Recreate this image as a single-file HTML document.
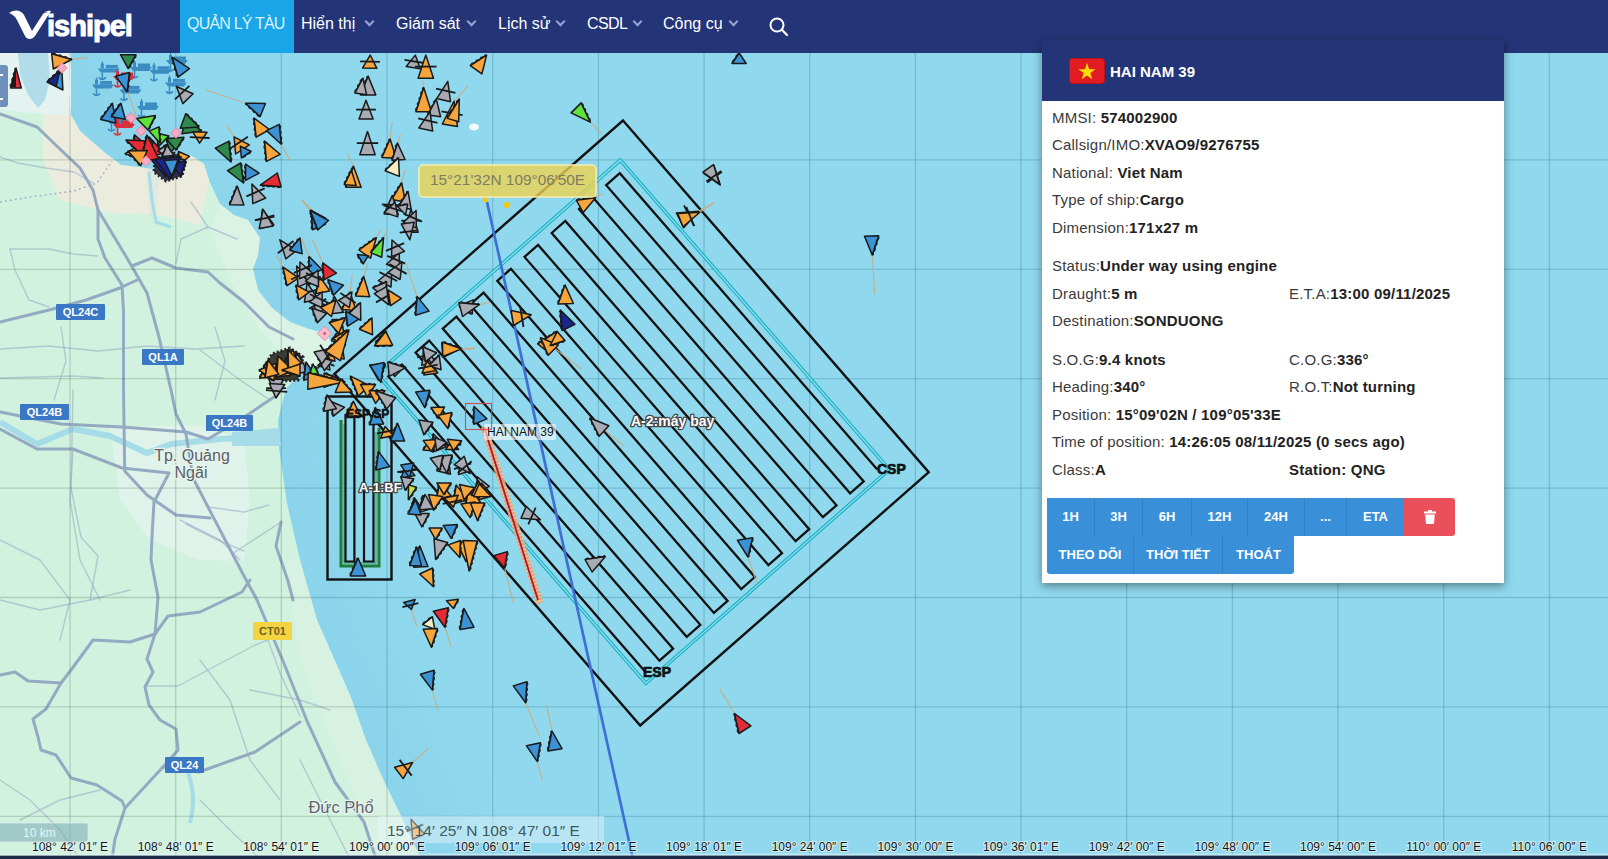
<!DOCTYPE html><html><head><meta charset="utf-8"><style>
*{margin:0;padding:0;box-sizing:border-box}
html,body{width:1608px;height:859px;overflow:hidden;background:#90d8ed;font-family:"Liberation Sans",sans-serif}
#map{position:absolute;left:0;top:0;width:1608px;height:859px}
#hdr{position:absolute;left:0;top:0;width:1608px;height:53px;background:#243577}
.nav{position:absolute;top:0;height:53px;line-height:47px;color:#fff;font-size:16px;white-space:nowrap}
.nav.act{background:#1aa5e8;color:#d8f3ff}
.chev{position:absolute;top:17.5px;width:7px;height:7px;border-right:2px solid #96a4d4;border-bottom:2px solid #96a4d4;transform:rotate(45deg)}
#panel{position:absolute;left:1042px;top:40px;width:462px;height:543px;background:#fff;box-shadow:0 3px 9px rgba(0,0,0,.42)}
#ph{position:absolute;left:0;top:0;width:462px;height:61px;background:#243577}
.row{position:absolute;left:10px;font-size:15px;letter-spacing:0.2px;color:#3a3a3a;white-space:nowrap;line-height:18px}
.row b{color:#222}
.c2{left:247px}
.btn{position:absolute;height:38px;background:#3a8fd9;color:#fff;font-weight:bold;font-size:13px;text-align:center;line-height:38px;border-right:1px solid #3580c4}

</style></head><body>
<svg id="map" width="1608" height="859" viewBox="0 0 1608 859">
<defs><filter id="blur" x="-20%" y="-20%" width="140%" height="140%"><feGaussianBlur stdDeviation="25"/></filter></defs>
<rect width="1608" height="859" fill="#90d8ed"/>
<polygon points="0,0 131,53 129,90 131,115 140,131 164,152 181,165 206,168 210,215 216,214 220,170 235,163 250,155 264,164 269,180 280,204 294,215 308,220 320,238 318,255 313,269 318,290 332,308 350,322 369,329 387,334 393,348 386,362 367,369 346,388 338,420 339,448 347,503 360,560 377,620 410,695 426,740 443,779 461,816 481,859 0,859" fill="#80cce6" opacity="0.3" filter="url(#blur)"/>
<g stroke="rgb(0,80,100)" stroke-opacity="0.2" stroke-width="1.3"><line x1="70.0" y1="53" x2="70.0" y2="859"/><line x1="175.7" y1="53" x2="175.7" y2="859"/><line x1="281.3" y1="53" x2="281.3" y2="859"/><line x1="387.0" y1="53" x2="387.0" y2="859"/><line x1="492.7" y1="53" x2="492.7" y2="859"/><line x1="598.4" y1="53" x2="598.4" y2="859"/><line x1="704.0" y1="53" x2="704.0" y2="859"/><line x1="809.7" y1="53" x2="809.7" y2="859"/><line x1="915.4" y1="53" x2="915.4" y2="859"/><line x1="1021.0" y1="53" x2="1021.0" y2="859"/><line x1="1126.7" y1="53" x2="1126.7" y2="859"/><line x1="1232.4" y1="53" x2="1232.4" y2="859"/><line x1="1338.0" y1="53" x2="1338.0" y2="859"/><line x1="1443.7" y1="53" x2="1443.7" y2="859"/><line x1="1549.4" y1="53" x2="1549.4" y2="859"/><line x1="0" y1="50.5" x2="1608" y2="50.5"/><line x1="0" y1="159.9" x2="1608" y2="159.9"/><line x1="0" y1="269.3" x2="1608" y2="269.3"/><line x1="0" y1="378.7" x2="1608" y2="378.7"/><line x1="0" y1="488.1" x2="1608" y2="488.1"/><line x1="0" y1="597.5" x2="1608" y2="597.5"/><line x1="0" y1="706.9" x2="1608" y2="706.9"/><line x1="0" y1="816.3" x2="1608" y2="816.3"/></g>
<polygon points="0,53 71,53 69,90 71,115 80,131 104,152 121,165 146,168 150,215 156,214 160,170 175,163 190,155 204,164 209,180 220,204 234,215 248,220 260,238 258,255 253,269 258,290 272,308 290,322 309,329 327,334 333,348 326,362 307,369 286,388 278,420 279,448 287,503 300,560 317,620 350,695 366,740 383,779 401,816 421,859 0,859" fill="#d0f2de"/>
<g>
<path d="M0,53 L71,53 L71,118 L43,114 L0,110 Z" fill="#e4f3f0"/>
<path d="M43,114 L71,115 L80,131 L104,152 L121,165 L146,168 L160,170 L190,155 L204,164 L209,180 L200,225 L160,215 L110,213 L60,200 L43,160 Z" fill="#f0ebde" opacity="0.85"/>
<path d="M18,53 L48,53 L50,80 L45,100 L38,108 L28,95 L20,75 Z" fill="#b0dde9"/>
<path d="M110,427 L200,425 L244,440 L250,500 L244,561 L200,560 L150,540 L120,500 Z" fill="#e4f3ec" opacity="0.8"/>
<path d="M220,204 L234,215 L248,220 L260,238 L258,255 L253,269 L258,290 L272,308 L290,322 L309,329 L327,334 L333,348 L326,362 L300,372 L260,330 L230,280 L210,230 Z" fill="#e6f5ee" opacity="0.45"/>
<path d="M300,560 L317,620 L350,695 L366,740 L383,779 L401,816 L421,859 L380,859 L340,760 L300,660 L285,560 Z" fill="#ddf3e6" opacity="0.55"/>
</g>
<polyline points="0,422 37,444 73,429 110,436 147,453 171,444 220,439 279,436" fill="none" stroke="#a6dbe8" stroke-width="6" stroke-linejoin="round"/>
<polygon points="232,432 279,428 281,446 232,446" fill="#a6dbe8"/>
<polyline points="149,172 152,200 156,222 171,227" fill="none" stroke="#a6dbe8" stroke-width="3"/>
<path d="M188,772 C192,785 196,800 190,823" fill="none" stroke="#a6dbe8" stroke-width="4"/>
<g fill="none" stroke="#94a9c2" stroke-linejoin="round" stroke-linecap="round">
<polyline points="0,157 18,163 46,168 74,172 93,183" stroke-width="1.4" opacity="0.55"/>
<polyline points="10,249 49,249 73,254 98,256" stroke-width="1.4" opacity="0.55"/>
<polyline points="10,249 15,270 29,300 49,307" stroke-width="1.4" opacity="0.55"/>
<polyline points="176,263 181,239 208,227 237,239" stroke-width="1.4" opacity="0.55"/>
<polyline points="191,202 208,227" stroke-width="1.4" opacity="0.55"/>
<polyline points="232,554 281,522" stroke-width="1.4" opacity="0.55"/>
<polyline points="145,686 178,686 255,645 268,640" stroke-width="1.4" opacity="0.55"/>
<polyline points="268,640 280,673 300,716" stroke-width="1.4" opacity="0.55"/>
<polyline points="0,540 40,560 70,600 60,640" stroke-width="1.4" opacity="0.55"/>
<polyline points="180,520 220,540 240,560" stroke-width="1.4" opacity="0.55"/>
<polyline points="0,780 30,800 60,830 80,859" stroke-width="1.4" opacity="0.55"/>
<polyline points="200,800 230,830 260,859" stroke-width="1.4" opacity="0.55"/>
<polyline points="200,350 240,380 270,400" stroke-width="1.4" opacity="0.55"/>
<polyline points="73,449 70,500 80,560 100,600" stroke-width="1.4" opacity="0.55"/>
<polyline points="300,760 320,800 350,859" stroke-width="1.4" opacity="0.55"/>
<polyline points="250,690 300,700 330,710" stroke-width="1.4" opacity="0.55"/>
<polyline points="0,349 49,346 98,351 147,346 196,349 244,346" stroke-width="1.4" opacity="0.55"/>
<polyline points="61,327 66,361 54,400" stroke-width="1.4" opacity="0.55"/>
<polyline points="215,327 225,361 215,400" stroke-width="1.4" opacity="0.55"/>
<polyline points="0,378 73,376 103,378" stroke-width="1.4" opacity="0.55"/>
<polyline points="73,390 71,488 81,537 98,556 90,600" stroke-width="1.4" opacity="0.55"/>
<polyline points="208,507 244,512 269,505" stroke-width="1.4" opacity="0.55"/>
<polyline points="186,524 220,541 244,551" stroke-width="1.4" opacity="0.55"/>
<polyline points="0,600 40,610 90,600 130,590" stroke-width="1.4" opacity="0.55"/>
<polyline points="200,660 230,700 250,760 280,800" stroke-width="1.4" opacity="0.55"/>
<polyline points="20,820 60,800 100,790" stroke-width="1.4" opacity="0.55"/>
<polyline points="0,114 37,127 61,150 80,168 93,190 98,210 98,239 105,258 122,285 123.5,312 123.5,390 124.7,471 147,495 176,515 210,518" stroke-width="3"/>
<polyline points="98,210 127,258 147,293 159,337 171,390 176,414 186,434 193,478 208,507 244,576 257,600 283,661 307,721 335,782 364,822 376,859" stroke-width="3"/>
<polyline points="0,322 49,310 86,300 120,288 137,280" stroke-width="3"/>
<polyline points="132,266 152,258 176,268 208,272 220,283 244,302 269,327 293,339" stroke-width="3"/>
<polyline points="0,412 61,424 122,427 186,432 208,439 240,420 274,397" stroke-width="3"/>
<polyline points="0,429 37,449 73,449 122,468 169,473 154,502 152,537 151,560 158,597 155,634 147,659 153,672 145,687 149,705 160,720 176,729 178,750 163,767 125,808 115,839 112,859" stroke-width="3"/>
<polyline points="281,522 276,546 288,581 293,600" stroke-width="3"/>
<polyline points="0,675 15,672 28,681 61,683 71,670 93,640 130,642 155,634" stroke-width="3"/>
<polyline points="61,683 46,709 33,719 38,737 41,750 56,755 71,778 97,785 122,801 125,808" stroke-width="3"/>
<polyline points="163,767 199,772 255,752 300,722" stroke-width="3"/>
<polyline points="155,634 168,616 200,612 242,592 250,580" stroke-width="3"/>
</g>
<polyline points="0,202 37,196 74,191 97,183 112,161" fill="none" stroke="#a9b3c6" stroke-width="1.5" stroke-dasharray="2,3"/>
<clipPath id="landclip"><polygon points="0,53 71,53 69,90 71,115 80,131 104,152 121,165 146,168 150,215 156,214 160,170 175,163 190,155 204,164 209,180 220,204 234,215 248,220 260,238 258,255 253,269 258,290 272,308 290,322 309,329 327,334 333,348 326,362 307,369 286,388 278,420 279,448 287,503 300,560 317,620 350,695 366,740 383,779 401,816 421,859 0,859"/></clipPath>
<g clip-path="url(#landclip)" stroke="rgb(60,90,70)" stroke-opacity="0.22" stroke-width="1.3"><line x1="70.0" y1="53" x2="70.0" y2="859"/><line x1="175.7" y1="53" x2="175.7" y2="859"/><line x1="281.3" y1="53" x2="281.3" y2="859"/><line x1="387.0" y1="53" x2="387.0" y2="859"/><line x1="492.7" y1="53" x2="492.7" y2="859"/><line x1="598.4" y1="53" x2="598.4" y2="859"/><line x1="704.0" y1="53" x2="704.0" y2="859"/><line x1="809.7" y1="53" x2="809.7" y2="859"/><line x1="915.4" y1="53" x2="915.4" y2="859"/><line x1="1021.0" y1="53" x2="1021.0" y2="859"/><line x1="1126.7" y1="53" x2="1126.7" y2="859"/><line x1="1232.4" y1="53" x2="1232.4" y2="859"/><line x1="1338.0" y1="53" x2="1338.0" y2="859"/><line x1="1443.7" y1="53" x2="1443.7" y2="859"/><line x1="1549.4" y1="53" x2="1549.4" y2="859"/><line x1="0" y1="50.5" x2="1608" y2="50.5"/><line x1="0" y1="159.9" x2="1608" y2="159.9"/><line x1="0" y1="269.3" x2="1608" y2="269.3"/><line x1="0" y1="378.7" x2="1608" y2="378.7"/><line x1="0" y1="488.1" x2="1608" y2="488.1"/><line x1="0" y1="597.5" x2="1608" y2="597.5"/><line x1="0" y1="706.9" x2="1608" y2="706.9"/><line x1="0" y1="816.3" x2="1608" y2="816.3"/></g>
<rect x="56" y="304" width="49" height="16" fill="#3a77c5" rx="1"/>
<text x="80.5" y="316" font-family="Liberation Sans" font-size="11" font-weight="bold" fill="#fff" text-anchor="middle">QL24C</text>
<rect x="142" y="349" width="42" height="16" fill="#3a77c5" rx="1"/>
<text x="163" y="361" font-family="Liberation Sans" font-size="11" font-weight="bold" fill="#fff" text-anchor="middle">QL1A</text>
<rect x="20" y="404" width="49" height="16" fill="#3a77c5" rx="1"/>
<text x="44.5" y="416" font-family="Liberation Sans" font-size="11" font-weight="bold" fill="#fff" text-anchor="middle">QL24B</text>
<rect x="206" y="415" width="47" height="16" fill="#3a77c5" rx="1"/>
<text x="229.5" y="427" font-family="Liberation Sans" font-size="11" font-weight="bold" fill="#fff" text-anchor="middle">QL24B</text>
<rect x="165" y="757" width="39" height="16" fill="#3a77c5" rx="1"/>
<text x="184.5" y="769" font-family="Liberation Sans" font-size="11" font-weight="bold" fill="#fff" text-anchor="middle">QL24</text>
<rect x="253" y="622" width="39" height="18" fill="#f4d443" rx="1"/>
<text x="272.5" y="635" font-family="Liberation Sans" font-size="11" font-weight="bold" fill="#6b6420" text-anchor="middle">CT01</text>
<text x="192" y="461" font-family="Liberation Sans" font-size="16" fill="#5a5f66" text-anchor="middle" stroke="#e8f4ee" stroke-width="2.5" paint-order="stroke">Tp. Quảng</text>
<text x="191" y="478" font-family="Liberation Sans" font-size="16" fill="#5a5f66" text-anchor="middle" stroke="#e8f4ee" stroke-width="2.5" paint-order="stroke">Ngãi</text>
<text x="341" y="813" font-family="Liberation Sans" font-size="16.5" fill="#5f6468" text-anchor="middle" stroke="#e8f4ee" stroke-width="2.5" paint-order="stroke">Đức Phổ</text>
<polygon points="623,120.5 928.743,472.19 640.205,725.515 334.462,373.825" fill="none" stroke="#111" stroke-width="2.4" stroke-linejoin="miter"/>
<polygon points="620.332,160.103 889.333,469.53 645.879,683.273 376.878,373.846" fill="none" stroke="#12b3c4" stroke-width="3.6"/>
<polygon points="620.332,160.103 889.333,469.53 645.879,683.273 376.878,373.846" fill="none" stroke="#90d8ed" stroke-width="1.4"/>
<path d="M877.3,469.4L619.8,173.2L606.2,185.2L863.7,481.4L850.1,493.3L592.6,197.1L579.0,209.1L836.5,505.3L822.9,517.2L565.3,221.0L551.7,233.0L809.2,529.2L795.6,541.2L538.1,244.9L524.5,256.9L782.0,553.1L768.4,565.1L510.9,268.8L497.3,280.8L754.8,577.0L741.2,589.0L483.6,292.7L470.0,304.7L727.6,600.9L713.9,612.9L456.4,316.7L442.8,328.6L700.3,624.8L686.7,636.8L429.2,340.6L415.6,352.5L673.1,648.7L659.5,660.7L402.0,364.5L388.3,376.4L645.9,672.6" fill="none" stroke="#111" stroke-width="2.3" stroke-linejoin="miter"/>
<rect x="327.5" y="396.5" width="64" height="183" fill="none" stroke="#111" stroke-width="2.4"/>
<path d="M341,420 V566 H379 V428" fill="none" stroke="#1d7f38" stroke-width="3"/>
<path d="M344,424 V563 H376 V432" fill="none" stroke="#2f9a4a" stroke-width="1"/>
<path d="M345.5,414 V561.5 H354.4 V416 H364 V561.5 H373.5 V414" fill="none" stroke="#111" stroke-width="2.2"/>
<line x1="487" y1="202" x2="633" y2="859" stroke="#3f6ed4" stroke-width="2.7"/>
<line x1="484" y1="427" x2="540" y2="603" stroke="#f5c49a" stroke-width="7" opacity="0.75"/>
<line x1="484" y1="427" x2="540" y2="603" stroke="#ef9a5a" stroke-width="7" stroke-dasharray="2,1.6" opacity="0.9"/>
<line x1="484" y1="427" x2="538" y2="600" stroke="#a8183c" stroke-width="1.8"/>
<g transform="translate(108.8,68.4)" fill="#3a8cc2" stroke="none"><path d="M-11,0 H11 L8,4 H-8 Z"/><rect x="-8" y="-5" width="3" height="5"/><rect x="-3" y="-3.5" width="12" height="3.5"/><rect x="-7" y="-7" width="1.2" height="3"/><path d="M-6.5,4 V11 M-10,9 Q-6.5,13 -3,9" fill="none" stroke="#3a8cc2" stroke-width="1.6"/></g>
<g transform="translate(141.0,67.0)" fill="#3a8cc2" stroke="none"><path d="M-11,0 H11 L8,4 H-8 Z"/><rect x="-8" y="-5" width="3" height="5"/><rect x="-3" y="-3.5" width="12" height="3.5"/><rect x="-7" y="-7" width="1.2" height="3"/><path d="M-6.5,4 V11 M-10,9 Q-6.5,13 -3,9" fill="none" stroke="#3a8cc2" stroke-width="1.6"/></g>
<g transform="translate(160.5,69.8)" fill="#3a8cc2" stroke="none"><path d="M-11,0 H11 L8,4 H-8 Z"/><rect x="-8" y="-5" width="3" height="5"/><rect x="-3" y="-3.5" width="12" height="3.5"/><rect x="-7" y="-7" width="1.2" height="3"/><path d="M-6.5,4 V11 M-10,9 Q-6.5,13 -3,9" fill="none" stroke="#3a8cc2" stroke-width="1.6"/></g>
<g transform="translate(177.0,60.0)" fill="#3a8cc2" stroke="none"><path d="M-11,0 H11 L8,4 H-8 Z"/><rect x="-8" y="-5" width="3" height="5"/><rect x="-3" y="-3.5" width="12" height="3.5"/><rect x="-7" y="-7" width="1.2" height="3"/><path d="M-6.5,4 V11 M-10,9 Q-6.5,13 -3,9" fill="none" stroke="#3a8cc2" stroke-width="1.6"/></g>
<g transform="translate(103.0,84.5)" fill="#3a8cc2" stroke="none"><path d="M-11,0 H11 L8,4 H-8 Z"/><rect x="-8" y="-5" width="3" height="5"/><rect x="-3" y="-3.5" width="12" height="3.5"/><rect x="-7" y="-7" width="1.2" height="3"/><path d="M-6.5,4 V11 M-10,9 Q-6.5,13 -3,9" fill="none" stroke="#3a8cc2" stroke-width="1.6"/></g>
<g transform="translate(130.5,89.4)" fill="#3a8cc2" stroke="none"><path d="M-11,0 H11 L8,4 H-8 Z"/><rect x="-8" y="-5" width="3" height="5"/><rect x="-3" y="-3.5" width="12" height="3.5"/><rect x="-7" y="-7" width="1.2" height="3"/><path d="M-6.5,4 V11 M-10,9 Q-6.5,13 -3,9" fill="none" stroke="#3a8cc2" stroke-width="1.6"/></g>
<g transform="translate(176.0,82.4)" fill="#3a8cc2" stroke="none"><path d="M-11,0 H11 L8,4 H-8 Z"/><rect x="-8" y="-5" width="3" height="5"/><rect x="-3" y="-3.5" width="12" height="3.5"/><rect x="-7" y="-7" width="1.2" height="3"/><path d="M-6.5,4 V11 M-10,9 Q-6.5,13 -3,9" fill="none" stroke="#3a8cc2" stroke-width="1.6"/></g>
<g transform="translate(148.0,106.0)" fill="#3a8cc2" stroke="none"><path d="M-11,0 H11 L8,4 H-8 Z"/><rect x="-8" y="-5" width="3" height="5"/><rect x="-3" y="-3.5" width="12" height="3.5"/><rect x="-7" y="-7" width="1.2" height="3"/><path d="M-6.5,4 V11 M-10,9 Q-6.5,13 -3,9" fill="none" stroke="#3a8cc2" stroke-width="1.6"/></g>
<g transform="translate(118.0,120.0)" fill="#3a8cc2" stroke="none"><path d="M-11,0 H11 L8,4 H-8 Z"/><rect x="-8" y="-5" width="3" height="5"/><rect x="-3" y="-3.5" width="12" height="3.5"/><rect x="-7" y="-7" width="1.2" height="3"/><path d="M-6.5,4 V11 M-10,9 Q-6.5,13 -3,9" fill="none" stroke="#3a8cc2" stroke-width="1.6"/></g>
<g transform="translate(124.0,76.0)" fill="#d8303c" stroke="none"><path d="M-11,0 H11 L8,4 H-8 Z"/><rect x="-8" y="-5" width="3" height="5"/><rect x="-3" y="-3.5" width="12" height="3.5"/><rect x="-7" y="-7" width="1.2" height="3"/><path d="M-6.5,4 V11 M-10,9 Q-6.5,13 -3,9" fill="none" stroke="#d8303c" stroke-width="1.6"/></g>
<g transform="translate(124.0,124.0)" fill="#d8303c" stroke="none"><path d="M-11,0 H11 L8,4 H-8 Z"/><rect x="-8" y="-5" width="3" height="5"/><rect x="-3" y="-3.5" width="12" height="3.5"/><rect x="-7" y="-7" width="1.2" height="3"/><path d="M-6.5,4 V11 M-10,9 Q-6.5,13 -3,9" fill="none" stroke="#d8303c" stroke-width="1.6"/></g>
<path d="M155,160 L172,152 L186,160 L182,176 L166,181 L154,172 Z" fill="#1c2240" stroke="#111" stroke-width="3" stroke-dasharray="2,2" opacity="0.9"/>
<path d="M262,370 L272,354 L290,348 L303,357 L298,380 L272,382 Z" fill="#2a2a22" stroke="#111" stroke-width="3" stroke-dasharray="2,2" opacity="0.9"/>
<g stroke="#1a1a1a" stroke-width="1.5" stroke-linejoin="round">
<polygon points="128.2,68.7 120.5,54.7 135.9,54.7" fill="#2e8a4c"/><polyline points="135.9,54.7 135.9,57.0 133.3,59.4 133.4,61.7 130.8,64.0 130.8,66.4 128.2,68.7" fill="none" stroke-width="1.1"/>
<polygon points="172.2,57.2 189.5,68.7 178.1,77.1" fill="#3b93d6"/><polyline points="178.1,77.1 176.2,75.0 176.4,71.4 174.5,69.3 174.7,65.7 172.9,63.7 173.1,60.0 171.2,58.0" fill="none" stroke-width="1.1"/>
<line x1="127.2" y1="91.8" x2="136.6" y2="115.9" stroke="#c7ad86" stroke-width="1.2" stroke-opacity="0.9"/><polygon points="127.2,91.8 115.7,76.2 129.4,72.6" fill="#3b93d6"/><polyline points="129.4,72.6 130.3,75.0 128.8,78.1 129.7,80.5 128.1,83.5 129.1,86.0 127.5,89.0 128.4,91.5" fill="none" stroke-width="1.1"/>
<polygon points="176.4,86.5 193.1,93.8 182.8,103.6" fill="#a8abb3"/><line x1="189.4" y1="85.8" x2="175.0" y2="99.4" stroke="#1b1b1b" stroke-width="1.8"/>
<line x1="245.6" y1="103.3" x2="205.8" y2="89.7" stroke="#c7ad86" stroke-width="1.2" stroke-opacity="0.9"/><polygon points="245.6,103.3 265.4,103.4 260.2,116.6" fill="#3b93d6"/><polyline points="260.2,116.6 257.7,115.9 256.1,112.8 253.5,112.1 251.9,109.0 249.3,108.3 247.7,105.2 245.1,104.5" fill="none" stroke-width="1.1"/>
<polygon points="112.5,103.3 115.8,122.9 100.8,119.4" fill="#3b93d6"/><polyline points="100.8,119.4 101.2,116.8 104.2,114.8 104.6,112.2 107.5,110.2 107.9,107.6 110.8,105.6 111.2,103.0" fill="none" stroke-width="1.1"/>
<polygon points="120.9,103.3 125.3,119.2 111.4,116.8" fill="#3b93d6"/><polyline points="111.4,116.8 111.7,114.3 114.6,112.3 114.9,109.8 117.7,107.8 118.0,105.3 120.9,103.3" fill="none" stroke-width="1.1"/>
<polygon points="148.1,129.5 137.9,119.5 154.2,116.5" fill="#5fe33b"/><polyline points="154.2,116.5 154.2,118.9 151.8,121.7 151.8,124.1 149.3,126.9 149.4,129.3" fill="none" stroke-width="1.1"/>
<polygon points="201.6,131.0 181.9,133.8 185.7,118.9" fill="#2e8a4c"/><polyline points="185.7,118.9 188.3,119.4 190.2,122.4 192.8,122.9 194.8,125.8 197.4,126.3 199.3,129.3 201.9,129.7" fill="none" stroke-width="1.1"/>
<polygon points="199.5,143.1 192.8,131.8 207.0,132.3" fill="#f6a53c"/><line x1="189.8" y1="137.2" x2="209.6" y2="138.0" stroke="#1b1b1b" stroke-width="1.8"/>
<polygon points="230.9,162.0 215.3,148.1 229.0,141.2" fill="#2e8a4c"/><polyline points="229.0,141.2 230.4,143.2 229.5,146.4 230.9,148.4 230.0,151.6 231.4,153.6 230.5,156.8 231.9,158.8 230.9,162.0" fill="none" stroke-width="1.1"/>
<line x1="234.1" y1="136.9" x2="226.8" y2="125.3" stroke="#c7ad86" stroke-width="1.2" stroke-opacity="0.9"/><polygon points="234.1,136.9 249.3,144.9 235.6,154.0" fill="#f6a53c"/><line x1="247.9" y1="136.7" x2="228.7" y2="149.6" stroke="#1b1b1b" stroke-width="1.8"/>
<polygon points="241.4,157.8 240.3,146.3 251.0,151.3" fill="#3b93d6"/><polyline points="251.0,151.3 249.8,153.5 246.2,154.6 245.0,156.7 241.4,157.8" fill="none" stroke-width="1.1"/>
<polygon points="254.0,118.0 269.5,129.5 256.2,137.1" fill="#f6a53c"/><polyline points="256.2,137.1 254.7,135.0 255.5,131.7 254.1,129.6 254.9,126.2 253.5,124.1 254.3,120.7 252.9,118.6" fill="none" stroke-width="1.1"/>
<line x1="281.3" y1="144.2" x2="289.6" y2="159.9" stroke="#c7ad86" stroke-width="1.2" stroke-opacity="0.9"/><polygon points="281.3,144.2 266.5,130.6 279.2,124.3" fill="#3b93d6"/><polyline points="279.2,124.3 280.7,126.5 279.8,130.0 281.2,132.2 280.4,135.7 281.8,137.9 281.0,141.3 282.4,143.6" fill="none" stroke-width="1.1"/>
<polygon points="264.5,141.1 280.1,154.3 266.5,161.4" fill="#f6a53c"/><polyline points="266.5,161.4 265.1,159.1 265.9,155.6 264.5,153.3 265.3,149.8 263.9,147.5 264.8,144.0 263.3,141.7" fill="none" stroke-width="1.1"/>
<polygon points="243.5,183.0 227.5,170.7 240.7,163.0" fill="#2e8a4c"/><polyline points="240.7,163.0 242.2,165.2 241.5,168.7 243.0,170.9 242.3,174.4 243.8,176.6 243.1,180.1 244.6,182.3" fill="none" stroke-width="1.1"/>
<polygon points="245.6,164.1 259.1,173.1 245.6,180.3" fill="#3b93d6"/><polyline points="245.6,180.3 244.4,178.2 245.6,174.9 244.4,172.8 245.6,169.5 244.5,167.4 245.6,164.1" fill="none" stroke-width="1.1"/>
<polygon points="260.3,185.1 277.3,173.0 281.1,186.7" fill="#e52b35"/><polyline points="281.1,186.7 278.8,187.7 275.9,186.3 273.6,187.3 270.7,185.9 268.4,186.9 265.5,185.5 263.2,186.5 260.3,185.1" fill="none" stroke-width="1.1"/>
<polygon points="237.2,186.1 243.9,205.1 229.7,204.8" fill="#a8abb3"/><polyline points="229.7,204.8 229.5,202.1 231.9,199.5 231.6,196.8 234.0,194.1 233.8,191.4 236.2,188.8 235.9,186.1" fill="none" stroke-width="1.1"/>
<polygon points="251.9,184.0 265.7,198.0 252.8,203.6" fill="#a8abb3"/><line x1="264.7" y1="188.4" x2="246.5" y2="196.4" stroke="#1b1b1b" stroke-width="1.8"/>
<polygon points="262.4,209.2 273.8,224.8 260.2,228.4" fill="#a8abb3"/><line x1="274.3" y1="215.3" x2="255.1" y2="220.4" stroke="#1b1b1b" stroke-width="1.8"/>
<line x1="310.6" y1="210.2" x2="302.2" y2="199.8" stroke="#c7ad86" stroke-width="1.2" stroke-opacity="0.9"/><polygon points="310.6,210.2 325.6,218.1 314.4,226.7" fill="#3b93d6"/><polyline points="314.4,226.7 312.8,224.8 313.2,221.2 311.5,219.3 311.9,215.7 310.2,213.8 310.6,210.2" fill="none" stroke-width="1.1"/>
<polygon points="134.5,134.8 151.5,149.8 134.3,157.5" fill="#e52b35"/><polyline points="134.3,157.5 133.1,155.2 134.3,151.8 133.2,149.5 134.4,146.1 133.2,143.8 134.4,140.4 133.3,138.1 134.5,134.8" fill="none" stroke-width="1.1"/>
<polygon points="149.2,136.9 163.9,152.9 147.1,158.5" fill="#e52b35"/><polyline points="147.1,158.5 146.1,156.2 147.6,153.1 146.6,150.8 148.1,147.7 147.2,145.4 148.7,142.3 147.7,140.0 149.2,136.9" fill="none" stroke-width="1.1"/>
<polygon points="125.1,153.6 141.9,143.3 143.9,159.7" fill="#f6a53c"/><polyline points="143.9,159.7 141.3,160.2 138.5,158.0 136.0,158.4 133.1,156.2 130.6,156.7 127.8,154.5 125.2,154.9" fill="none" stroke-width="1.1"/>
<polygon points="172.2,141.1 169.9,158.4 157.8,151.0" fill="#a8abb3"/><polyline points="157.8,151.0 159.1,148.6 162.6,147.7 163.9,145.3 167.4,144.4 168.7,142.0 172.2,141.1" fill="none" stroke-width="1.1"/>
<polygon points="180.6,141.1 170.5,152.5 165.6,138.0" fill="#2e8a4c"/><polyline points="165.6,138.0 168.2,137.4 171.6,139.2 174.2,138.6 177.6,140.4 180.2,139.8" fill="none" stroke-width="1.1"/>
<polygon points="155.5,132.7 168.9,136.0 158.9,146.1" fill="#5fe33b"/><polyline points="158.9,146.1 157.3,144.3 157.5,140.7 155.9,138.9 156.1,135.3 154.6,133.6" fill="none" stroke-width="1.1"/>
<polygon points="178.5,151.5 189.5,156.4 180.1,163.5" fill="#f6a53c"/><polyline points="180.1,163.5 178.7,161.3 179.3,157.5 177.9,155.3 178.5,151.5" fill="none" stroke-width="1.1"/>
<polygon points="166.0,176.7 151.8,160.4 167.5,155.2" fill="#1b2590"/><polyline points="167.5,155.2 168.5,157.5 167.1,160.6 168.2,162.9 166.7,165.9 167.8,168.2 166.3,171.3 167.4,173.6 166.0,176.7" fill="none" stroke-width="1.1"/>
<polygon points="172.2,174.6 168.4,155.8 184.4,159.8" fill="#3b93d6"/><polyline points="184.4,159.8 184.0,162.3 181.0,164.0 180.5,166.5 177.5,168.3 177.0,170.7 174.0,172.5 173.5,174.9" fill="none" stroke-width="1.1"/>
<polygon points="157.6,162.0 170.1,154.9 170.1,169.1" fill="#3b93d6"/><polyline points="170.1,169.1 167.6,169.0 165.1,166.3 162.6,166.1 160.1,163.4 157.6,163.3" fill="none" stroke-width="1.1"/>
<polygon points="180.6,176.7 171.5,163.0 185.5,161.0" fill="#1b2590"/><polyline points="185.5,161.0 186.0,163.4 183.9,166.2 184.4,168.7 182.3,171.5 182.7,173.9 180.6,176.7" fill="none" stroke-width="1.1"/>
<polygon points="370.2,55.1 376.9,68.3 362.7,67.9" fill="#f6a53c"/><line x1="379.9" y1="61.9" x2="360.1" y2="61.3" stroke="#1b1b1b" stroke-width="1.8"/>
<polygon points="368.1,76.1 375.8,94.9 360.5,94.9" fill="#a8abb3"/><polyline points="360.5,94.9 360.3,92.2 362.7,89.5 362.5,86.8 364.8,84.1 364.6,81.5 367.0,78.8 366.8,76.1" fill="none" stroke-width="1.1"/>
<polygon points="362.9,78.2 366.6,94.7 354.9,93.1" fill="#a8abb3"/><polyline points="354.9,93.1 355.0,90.4 357.6,88.1 357.6,85.5 360.2,83.1 360.3,80.5 362.9,78.2" fill="none" stroke-width="1.1"/>
<polygon points="366.0,100.2 373.1,119.0 359.0,119.0" fill="#a8abb3"/><line x1="375.9" y1="109.6" x2="356.1" y2="109.6" stroke="#1b1b1b" stroke-width="1.8"/>
<polygon points="367.5,131.6 375.2,154.7 359.8,154.7" fill="#a8abb3"/><line x1="378.2" y1="143.1" x2="356.8" y2="143.1" stroke="#1b1b1b" stroke-width="1.8"/>
<line x1="390.1" y1="139.0" x2="392.2" y2="122.2" stroke="#c7ad86" stroke-width="1.2" stroke-opacity="0.9"/><polygon points="390.1,139.0 396.2,158.2 382.0,157.4" fill="#f6a53c"/><polyline points="382.0,157.4 381.9,154.7 384.3,152.2 384.2,149.4 386.7,146.9 386.5,144.2 389.0,141.6 388.8,138.9" fill="none" stroke-width="1.1"/>
<line x1="397.5" y1="143.1" x2="400.6" y2="134.8" stroke="#c7ad86" stroke-width="1.2" stroke-opacity="0.9"/><polygon points="397.5,143.1 405.0,159.5 392.1,160.3" fill="#a8abb3"/><polyline points="392.1,160.3 391.7,157.5 393.9,154.6 393.5,151.8 395.7,148.9 395.3,146.1 397.5,143.1" fill="none" stroke-width="1.1"/>
<polygon points="398.5,157.8 399.4,176.4 385.1,170.7" fill="#f3efc2"/><polyline points="385.1,170.7 385.8,168.4 389.0,167.0 389.7,164.7 392.8,163.3 393.5,161.0 396.6,159.7 397.3,157.3" fill="none" stroke-width="1.1"/>
<line x1="353.5" y1="166.2" x2="347.2" y2="153.6" stroke="#c7ad86" stroke-width="1.2" stroke-opacity="0.9"/><polygon points="353.5,166.2 361.1,187.2 345.8,187.2" fill="#f6a53c"/><polyline points="345.8,187.2 345.4,184.6 347.7,181.9 347.4,179.3 349.6,176.7 349.3,174.1 351.5,171.4 351.2,168.8 353.5,166.2" fill="none" stroke-width="1.1"/>
<polygon points="351.4,170.4 356.2,185.5 344.4,184.7" fill="#f6a53c"/><polyline points="344.4,184.7 344.3,182.2 346.7,179.9 346.6,177.4 349.1,175.2 348.9,172.7 351.4,170.4" fill="none" stroke-width="1.1"/>
<line x1="401.7" y1="183.0" x2="404.8" y2="170.4" stroke="#c7ad86" stroke-width="1.2" stroke-opacity="0.9"/><polygon points="401.7,183.0 405.5,202.0 391.6,199.6" fill="#f6a53c"/><polyline points="391.6,199.6 391.7,197.0 394.5,194.8 394.6,192.2 397.3,190.1 397.5,187.5 400.2,185.3 400.4,182.8" fill="none" stroke-width="1.1"/>
<polygon points="392.2,195.6 398.3,214.8 384.1,214.0" fill="#a8abb3"/><line x1="401.6" y1="205.5" x2="381.8" y2="204.4" stroke="#1b1b1b" stroke-width="1.8"/>
<polygon points="408.0,191.4 411.2,209.3 398.4,206.9" fill="#a8abb3"/><polyline points="398.4,206.9 398.5,204.5 401.2,202.5 401.2,200.0 403.9,198.0 404.0,195.6 406.6,193.6 406.7,191.1" fill="none" stroke-width="1.1"/>
<polygon points="411.1,209.2 418.2,232.2 404.0,232.2" fill="#a8abb3"/><line x1="421.0" y1="220.7" x2="401.2" y2="220.7" stroke="#1b1b1b" stroke-width="1.8"/>
<line x1="311.5" y1="210.2" x2="302.1" y2="199.8" stroke="#c7ad86" stroke-width="1.2" stroke-opacity="0.9"/><polygon points="311.5,210.2 325.4,224.2 312.4,229.8" fill="#3b93d6"/><polyline points="312.4,229.8 311.1,227.6 312.1,224.2 310.8,222.0 311.9,218.6 310.6,216.4 311.7,213.0 310.3,210.8" fill="none" stroke-width="1.1"/>
<polygon points="415.3,55.1 420.2,68.8 406.2,66.5" fill="#a8abb3"/><line x1="424.0" y1="63.0" x2="404.5" y2="59.8" stroke="#1b1b1b" stroke-width="1.8"/>
<polygon points="425.8,55.1 433.5,78.2 418.1,78.2" fill="#f6a53c"/><line x1="436.5" y1="66.6" x2="415.0" y2="66.6" stroke="#1b1b1b" stroke-width="1.8"/>
<line x1="423.7" y1="87.6" x2="422.6" y2="80.3" stroke="#c7ad86" stroke-width="1.2" stroke-opacity="0.9"/><polygon points="423.7,87.6 431.4,111.7 416.0,111.7" fill="#f6a53c"/><polyline points="416.0,111.7 415.6,109.0 417.7,106.3 417.3,103.7 419.4,101.0 419.0,98.3 421.1,95.6 420.7,92.9 422.8,90.3 422.4,87.6" fill="none" stroke-width="1.1"/>
<polygon points="447.8,81.3 450.5,101.7 436.7,98.6" fill="#a8abb3"/><line x1="455.4" y1="92.9" x2="436.0" y2="88.6" stroke="#1b1b1b" stroke-width="1.8"/>
<polygon points="436.3,99.1 440.6,116.7 427.7,115.1" fill="#a8abb3"/><polyline points="427.7,115.1 427.9,112.3 430.6,109.8 430.7,106.9 433.4,104.4 433.6,101.6 436.3,99.1" fill="none" stroke-width="1.1"/>
<polygon points="430.0,111.7 432.7,131.1 418.9,127.9" fill="#a8abb3"/><line x1="437.5" y1="122.9" x2="418.2" y2="118.3" stroke="#1b1b1b" stroke-width="1.8"/>
<line x1="454.1" y1="101.2" x2="467.7" y2="86.5" stroke="#c7ad86" stroke-width="1.2" stroke-opacity="0.9"/><polygon points="454.1,101.2 457.5,126.6 442.3,124.0" fill="#f6a53c"/><line x1="462.6" y1="115.1" x2="441.4" y2="111.4" stroke="#1b1b1b" stroke-width="1.8"/>
<polygon points="459.3,99.1 458.7,121.8 447.4,118.4" fill="#f6a53c"/><polyline points="447.4,118.4 447.6,115.6 450.4,113.6 450.6,110.8 453.4,108.8 453.6,106.0 456.3,103.9 456.6,101.2 459.3,99.1" fill="none" stroke-width="1.1"/>
<polygon points="486.6,55.1 481.9,73.9 470.3,65.7" fill="#f6a53c"/><polyline points="470.3,65.7 471.6,63.4 475.0,62.6 476.2,60.4 479.6,59.6 480.9,57.4 484.3,56.6 485.5,54.3" fill="none" stroke-width="1.1"/>
<line x1="590.3" y1="122.2" x2="601.8" y2="133.7" stroke="#c7ad86" stroke-width="1.2" stroke-opacity="0.9"/><polygon points="590.3,122.2 571.1,112.9 581.1,102.9" fill="#5fe33b"/><polyline points="581.1,102.9 583.1,104.4 583.4,107.7 585.5,109.2 585.7,112.6 587.8,114.0 588.0,117.4 590.1,118.9 590.3,122.2" fill="none" stroke-width="1.1"/>
<polygon points="739.2,53.0 746.2,63.5 732.1,63.5" fill="#3b93d6"/><polyline points="732.1,63.5 732.6,60.9 735.6,58.2 736.1,55.6 739.2,53.0" fill="none" stroke-width="1.1"/>
<polygon points="720.3,185.1 703.5,173.2 714.0,165.5" fill="#a8abb3"/><line x1="707.2" y1="182.6" x2="721.9" y2="171.8" stroke="#1b1b1b" stroke-width="1.8"/>
<line x1="595.6" y1="197.7" x2="602.9" y2="193.5" stroke="#c7ad86" stroke-width="1.2" stroke-opacity="0.9"/><polygon points="595.6,197.7 583.3,212.6 576.4,200.3" fill="#f6a53c"/><polyline points="576.4,200.3 578.5,198.8 581.9,199.5 584.0,198.0 587.3,198.8 589.4,197.3 592.8,198.0 594.9,196.5" fill="none" stroke-width="1.1"/>
<line x1="698.3" y1="211.3" x2="714.0" y2="202.9" stroke="#c7ad86" stroke-width="1.2" stroke-opacity="0.9"/><polygon points="698.3,211.3 683.7,227.7 676.4,212.9" fill="#f6a53c"/><line x1="694.3" y1="226.2" x2="684.0" y2="205.4" stroke="#1b1b1b" stroke-width="1.8"/>
<polygon points="263.1,209.4 273.2,226.0 259.2,228.5" fill="#a8abb3"/><line x1="274.4" y1="216.6" x2="254.9" y2="220.1" stroke="#1b1b1b" stroke-width="1.8"/>
<line x1="310.2" y1="210.5" x2="301.8" y2="200.0" stroke="#c7ad86" stroke-width="1.2" stroke-opacity="0.9"/><polygon points="310.2,210.5 328.5,220.5 317.9,229.9" fill="#3b93d6"/><polyline points="317.9,229.9 316.0,228.3 316.0,225.0 314.1,223.4 314.1,220.2 312.1,218.6 312.2,215.3 310.2,213.8 310.2,210.5" fill="none" stroke-width="1.1"/>
<polygon points="279.8,239.8 296.9,250.1 285.8,258.9" fill="#a8abb3"/><line x1="293.4" y1="241.0" x2="277.8" y2="253.3" stroke="#1b1b1b" stroke-width="1.8"/>
<line x1="283.0" y1="267.1" x2="276.7" y2="255.6" stroke="#c7ad86" stroke-width="1.2" stroke-opacity="0.9"/><polygon points="283.0,267.1 298.7,277.8 287.0,285.7" fill="#f6a53c"/><polyline points="287.0,285.7 285.3,283.8 285.8,280.4 284.2,278.5 284.7,275.1 283.0,273.1 283.5,269.7 281.9,267.8" fill="none" stroke-width="1.1"/>
<polygon points="296.6,266.0 311.9,280.6 298.0,287.1" fill="#a8abb3"/><line x1="310.5" y1="270.4" x2="291.1" y2="279.5" stroke="#1b1b1b" stroke-width="1.8"/>
<polygon points="307.1,282.8 318.2,299.0 304.4,302.3" fill="#a8abb3"/><line x1="318.8" y1="289.4" x2="299.5" y2="294.0" stroke="#1b1b1b" stroke-width="1.8"/>
<polygon points="313.4,296.4 327.9,307.6 315.6,314.6" fill="#a8abb3"/><line x1="326.2" y1="298.9" x2="309.0" y2="308.7" stroke="#1b1b1b" stroke-width="1.8"/>
<polygon points="302.9,271.3 317.8,274.1 309.0,285.2" fill="#a8abb3"/><polyline points="309.0,285.2 306.9,283.4 306.5,279.6 304.5,277.9 304.1,274.1 302.1,272.3" fill="none" stroke-width="1.1"/>
<line x1="309.2" y1="256.6" x2="301.8" y2="238.8" stroke="#c7ad86" stroke-width="1.2" stroke-opacity="0.9"/><polygon points="309.2,256.6 322.0,269.7 308.9,275.0" fill="#3b93d6"/><polyline points="308.9,275.0 307.7,272.8 309.0,269.7 307.8,267.6 309.1,264.5 307.9,262.3 309.1,259.2 308.0,257.1" fill="none" stroke-width="1.1"/>
<line x1="322.8" y1="262.9" x2="312.3" y2="239.8" stroke="#c7ad86" stroke-width="1.2" stroke-opacity="0.9"/><polygon points="322.8,262.9 336.4,273.2 323.9,279.9" fill="#e52b35"/><polyline points="323.9,279.9 322.6,277.7 323.5,274.2 322.2,272.0 323.2,268.6 321.8,266.3 322.8,262.9" fill="none" stroke-width="1.1"/>
<polygon points="319.7,276.5 329.8,290.9 315.9,293.6" fill="#f6a53c"/><polyline points="315.9,293.6 315.2,291.0 317.1,287.9 316.5,285.3 318.4,282.2 317.8,279.6 319.7,276.5" fill="none" stroke-width="1.1"/>
<polygon points="328.1,279.7 343.5,285.1 333.5,295.2" fill="#3b93d6"/><polyline points="333.5,295.2 331.7,293.5 331.7,290.0 329.9,288.3 329.9,284.8 328.0,283.2 328.1,279.7" fill="none" stroke-width="1.1"/>
<polygon points="334.3,296.4 343.5,312.3 329.4,314.1" fill="#a8abb3"/><polyline points="329.4,314.1 328.8,311.7 330.8,309.0 330.2,306.7 332.2,304.0 331.6,301.6 333.6,299.0 333.0,296.6" fill="none" stroke-width="1.1"/>
<line x1="350.1" y1="292.2" x2="352.2" y2="275.5" stroke="#c7ad86" stroke-width="1.2" stroke-opacity="0.9"/><polygon points="350.1,292.2 356.1,310.5 341.9,309.6" fill="#f6a53c"/><polyline points="341.9,309.6 341.8,307.1 344.3,304.7 344.1,302.1 346.6,299.7 346.4,297.1 348.9,294.7 348.8,292.2" fill="none" stroke-width="1.1"/>
<line x1="363.7" y1="276.5" x2="367.9" y2="262.9" stroke="#c7ad86" stroke-width="1.2" stroke-opacity="0.9"/><polygon points="363.7,276.5 369.7,296.8 355.6,296.1" fill="#f6a53c"/><polyline points="355.6,296.1 355.3,293.6 357.6,291.2 357.3,288.7 359.6,286.3 359.3,283.8 361.7,281.4 361.4,278.9 363.7,276.5" fill="none" stroke-width="1.1"/>
<polygon points="360.5,302.7 360.8,320.2 347.7,314.6" fill="#a8abb3"/><polyline points="347.7,314.6 348.7,312.1 352.0,310.6 353.0,308.2 356.3,306.7 357.2,304.2 360.5,302.7" fill="none" stroke-width="1.1"/>
<polygon points="345.9,311.1 358.7,319.2 347.7,326.1" fill="#3b93d6"/><polyline points="347.7,326.1 346.3,323.8 347.0,320.1 345.5,317.8 346.2,314.1 344.8,311.8" fill="none" stroke-width="1.1"/>
<polygon points="332.2,319.5 344.9,320.1 336.4,331.5" fill="#f6a53c"/><polyline points="336.4,331.5 334.6,329.5 334.3,325.5 332.5,323.5 332.2,319.5" fill="none" stroke-width="1.1"/>
<line x1="376.3" y1="237.7" x2="380.5" y2="229.4" stroke="#c7ad86" stroke-width="1.2" stroke-opacity="0.9"/><polygon points="376.3,237.7 370.5,258.2 359.0,250.0" fill="#f6a53c"/><polyline points="359.0,250.0 360.1,247.7 363.3,246.9 364.4,244.7 367.6,243.9 368.7,241.6 371.9,240.8 373.0,238.5 376.3,237.7" fill="none" stroke-width="1.1"/>
<polygon points="357.4,254.5 368.3,255.7 363.3,263.8" fill="#3b93d6"/><polyline points="363.3,263.8 361.1,262.5 360.3,259.1 358.2,257.9 357.4,254.5" fill="none" stroke-width="1.1"/>
<line x1="383.6" y1="237.7" x2="387.8" y2="229.4" stroke="#c7ad86" stroke-width="1.2" stroke-opacity="0.9"/><polygon points="383.6,237.7 381.7,257.2 370.8,252.6" fill="#5fe33b"/><polyline points="370.8,252.6 371.5,250.0 374.5,248.4 375.1,245.7 378.1,244.1 378.8,241.5 381.8,239.9 382.4,237.2" fill="none" stroke-width="1.1"/>
<polygon points="399.3,252.4 399.5,269.9 386.5,264.3" fill="#a8abb3"/><line x1="405.3" y1="263.7" x2="387.1" y2="255.8" stroke="#1b1b1b" stroke-width="1.8"/>
<polygon points="392.0,269.2 391.0,287.0 378.3,280.7" fill="#a8abb3"/><line x1="397.2" y1="281.0" x2="379.5" y2="272.1" stroke="#1b1b1b" stroke-width="1.8"/>
<polygon points="386.8,281.8 383.9,296.7 372.8,287.8" fill="#a8abb3"/><polyline points="372.8,287.8 374.6,285.8 378.4,285.4 380.2,283.4 384.0,283.0 385.7,280.9" fill="none" stroke-width="1.1"/>
<polygon points="388.8,304.8 374.3,293.7 386.6,286.6" fill="#a8abb3"/><line x1="376.0" y1="302.4" x2="393.3" y2="292.6" stroke="#1b1b1b" stroke-width="1.8"/>
<polygon points="395.1,202.1 397.7,216.9 384.2,212.4" fill="#a8abb3"/><line x1="402.4" y1="211.5" x2="383.6" y2="205.3" stroke="#1b1b1b" stroke-width="1.8"/>
<polygon points="407.7,204.2 405.6,214.7 397.3,206.3" fill="#a8abb3"/><polyline points="397.3,206.3 398.9,204.9 402.5,205.3 404.2,203.8 407.7,204.2" fill="none" stroke-width="1.1"/>
<polygon points="416.1,210.5 416.3,227.9 403.3,222.4" fill="#a8abb3"/><line x1="422.1" y1="221.7" x2="403.8" y2="213.9" stroke="#1b1b1b" stroke-width="1.8"/>
<polygon points="409.8,239.8 401.3,223.9 414.2,222.3" fill="#a8abb3"/><line x1="399.7" y1="232.6" x2="417.8" y2="230.3" stroke="#1b1b1b" stroke-width="1.8"/>
<line x1="417.1" y1="296.4" x2="405.6" y2="262.9" stroke="#c7ad86" stroke-width="1.2" stroke-opacity="0.9"/><polygon points="417.1,296.4 429.1,311.1 415.6,315.3" fill="#3b93d6"/><polyline points="415.6,315.3 414.6,313.0 416.1,309.9 415.0,307.6 416.5,304.5 415.5,302.2 416.9,299.1 415.9,296.8" fill="none" stroke-width="1.1"/>
<polygon points="459.1,305.9 473.2,299.9 472.2,314.0" fill="#a8abb3"/><polyline points="472.2,314.0 469.4,313.7 466.9,310.7 464.2,310.4 461.7,307.5 459.0,307.2" fill="none" stroke-width="1.1"/>
<polygon points="385.7,331.0 391.8,345.5 375.4,342.9" fill="#f6a53c"/><polyline points="375.4,342.9 375.9,340.8 378.9,339.0 379.3,336.8 382.3,335.0 382.7,332.8 385.7,331.0" fill="none" stroke-width="1.1"/>
<line x1="460.1" y1="348.8" x2="474.8" y2="348.8" stroke="#c7ad86" stroke-width="1.2" stroke-opacity="0.9"/><polygon points="460.1,348.8 443.8,357.0 442.9,342.8" fill="#f6a53c"/><polyline points="442.9,342.8 445.3,342.4 447.8,344.5 450.2,344.1 452.7,346.3 455.1,345.8 457.7,348.0 460.0,347.5" fill="none" stroke-width="1.1"/>
<polygon points="424.5,346.8 435.5,361.8 421.8,365.2" fill="#a8abb3"/><line x1="436.2" y1="352.7" x2="417.0" y2="357.5" stroke="#1b1b1b" stroke-width="1.8"/>
<polygon points="428.7,359.3 437.8,373.0 423.8,375.0" fill="#f6a53c"/><line x1="439.5" y1="365.3" x2="419.9" y2="368.1" stroke="#1b1b1b" stroke-width="1.8"/>
<polygon points="439.2,355.1 441.1,369.8 428.8,365.7" fill="#a8abb3"/><polyline points="428.8,365.7 429.6,363.1 433.0,361.5 433.8,358.9 437.1,357.2 437.9,354.7" fill="none" stroke-width="1.1"/>
<polygon points="378.4,380.1 369.7,365.1 385.0,364.1" fill="#3b93d6"/><polyline points="385.0,364.1 385.2,366.6 382.8,369.4 383.0,372.0 380.6,374.7 380.8,377.3 378.4,380.1" fill="none" stroke-width="1.1"/>
<polygon points="390.9,363.5 403.9,367.3 394.7,376.5" fill="#a8abb3"/><polyline points="394.7,376.5 393.1,374.8 393.2,371.3 391.5,369.6 391.7,366.1 390.0,364.4" fill="none" stroke-width="1.1"/>
<polygon points="332.2,344.7 334.9,361.3 321.2,357.4" fill="#f6a53c"/><polyline points="321.2,357.4 321.8,354.9 324.9,353.1 325.5,350.7 328.6,348.9 329.2,346.4 332.2,344.7" fill="none" stroke-width="1.1"/>
<polygon points="342.7,325.8 345.4,344.3 331.7,340.8" fill="#f6a53c"/><polyline points="331.7,340.8 332.0,338.4 334.8,336.5 335.1,334.1 338.0,332.2 338.3,329.8 341.1,327.9 341.5,325.5" fill="none" stroke-width="1.1"/>
<polygon points="328.1,357.2 329.9,370.1 317.8,365.3" fill="#a8abb3"/><line x1="334.4" y1="365.8" x2="317.5" y2="359.1" stroke="#1b1b1b" stroke-width="1.8"/>
<polygon points="565.0,284.9 573.4,303.5 558.1,304.1" fill="#f6a53c"/><polyline points="558.1,304.1 557.8,301.4 560.1,298.6 559.8,296.0 562.1,293.2 561.7,290.5 564.0,287.7 563.7,285.0" fill="none" stroke-width="1.1"/>
<polygon points="560.3,310.1 575.0,324.3 562.2,330.5" fill="#1b2590"/><polyline points="562.2,330.5 560.8,328.1 561.7,324.6 560.2,322.3 561.1,318.8 559.7,316.5 560.6,313.0 559.1,310.7" fill="none" stroke-width="1.1"/>
<polygon points="531.2,314.8 513.6,325.5 511.1,310.4" fill="#f6a53c"/><line x1="523.5" y1="327.0" x2="520.0" y2="305.8" stroke="#1b1b1b" stroke-width="1.8"/>
<line x1="479.3" y1="304.6" x2="490.3" y2="302.2" stroke="#c7ad86" stroke-width="1.2" stroke-opacity="0.9"/><polygon points="479.3,304.6 462.6,316.5 458.9,302.8" fill="#a8abb3"/><polyline points="458.9,302.8 461.5,301.8 464.7,303.3 467.3,302.3 470.6,303.8 473.1,302.8 476.4,304.3 479.0,303.3" fill="none" stroke-width="1.1"/>
<polygon points="557.1,331.3 549.8,353.3 537.7,343.9" fill="#f6a53c"/><polyline points="537.7,343.9 539.1,341.6 542.6,340.8 544.0,338.4 547.4,337.6 548.8,335.3 552.3,334.5 553.7,332.1 557.1,331.3" fill="none" stroke-width="1.1"/>
<line x1="540.6" y1="337.6" x2="581.5" y2="369.1" stroke="#c7ad86" stroke-width="1.2" stroke-opacity="0.9"/><polygon points="540.6,337.6 558.2,345.2 548.2,355.2" fill="#f6a53c"/><polyline points="548.2,355.2 546.2,353.6 546.0,350.2 544.0,348.6 543.9,345.1 541.9,343.6 541.7,340.1 539.7,338.5" fill="none" stroke-width="1.1"/>
<polygon points="550.1,345.5 557.2,331.6 564.9,340.5" fill="#f6a53c"/><polyline points="564.9,340.5 563.3,342.3 560.0,342.2 558.3,344.0 555.0,343.8 553.4,345.6 550.1,345.5" fill="none" stroke-width="1.1"/>
<line x1="460.4" y1="348.6" x2="474.6" y2="348.6" stroke="#c7ad86" stroke-width="1.2" stroke-opacity="0.9"/><polygon points="460.4,348.6 443.0,357.2 441.7,343.1" fill="#f6a53c"/><polyline points="441.7,343.1 444.3,342.6 447.1,344.7 449.6,344.2 452.4,346.3 455.0,345.8 457.8,347.8 460.3,347.3" fill="none" stroke-width="1.1"/>
<polygon points="265.5,363.5 275.2,376.0 260.0,378.3" fill="#f6a53c"/><polyline points="260.0,378.3 259.6,376.1 261.8,373.4 261.5,371.1 263.7,368.5 263.3,366.2 265.5,363.5" fill="none" stroke-width="1.1"/>
<polygon points="281.2,361.4 290.5,375.5 274.0,376.7" fill="#f6a53c"/><polyline points="274.0,376.7 273.9,374.3 276.4,371.6 276.3,369.2 278.8,366.5 278.7,364.1 281.2,361.4" fill="none" stroke-width="1.1"/>
<polygon points="298.0,353.1 306.7,371.5 291.4,372.4" fill="#a8abb3"/><polyline points="291.4,372.4 291.0,369.7 293.3,366.8 292.9,364.2 295.1,361.3 294.8,358.6 297.0,355.8 296.7,353.1" fill="none" stroke-width="1.1"/>
<polygon points="292.7,349.9 298.2,362.0 285.2,360.9" fill="#f6a53c"/><polyline points="285.2,360.9 285.4,358.6 288.2,356.5 288.4,354.2 291.2,352.1 291.4,349.8" fill="none" stroke-width="1.1"/>
<polygon points="276.0,397.1 268.9,379.3 283.0,379.3" fill="#a8abb3"/><line x1="266.1" y1="388.2" x2="285.9" y2="388.2" stroke="#1b1b1b" stroke-width="1.8"/>
<polygon points="305.3,367.7 315.0,376.0 304.0,380.4" fill="#3b93d6"/><polyline points="304.0,380.4 303.1,377.7 304.7,374.1 303.8,371.4 305.3,367.7" fill="none" stroke-width="1.1"/>
<polygon points="315.8,366.7 320.0,378.7 309.5,377.7" fill="#5fe33b"/><polyline points="309.5,377.7 309.7,374.9 312.6,372.2 312.9,369.3 315.8,366.7" fill="none" stroke-width="1.1"/>
<polygon points="317.9,357.3 332.4,360.6 324.3,370.7" fill="#a8abb3"/><line x1="328.8" y1="354.4" x2="317.5" y2="368.5" stroke="#1b1b1b" stroke-width="1.8"/>
<polygon points="347.2,330.0 344.7,346.5 333.0,338.7" fill="#f6a53c"/><polyline points="333.0,338.7 334.3,336.5 337.7,335.8 339.0,333.6 342.5,332.9 343.8,330.7 347.2,330.0" fill="none" stroke-width="1.1"/>
<polygon points="341.0,338.4 344.2,358.9 329.3,355.6" fill="#f6a53c"/><polyline points="329.3,355.6 329.7,352.9 332.6,350.7 333.0,347.9 335.9,345.8 336.3,343.0 339.3,340.8 339.7,338.1" fill="none" stroke-width="1.1"/>
<polygon points="374.5,345.7 385.7,331.5 392.6,345.2" fill="#f6a53c"/><polyline points="392.6,345.2 390.2,346.5 386.6,345.4 384.1,346.6 380.5,345.6 378.1,346.8 374.5,345.7" fill="none" stroke-width="1.1"/>
<polygon points="343.1,380.3 324.2,387.4 324.2,373.2" fill="#f6a53c"/><polyline points="324.2,373.2 326.9,372.9 329.6,375.3 332.3,375.0 335.0,377.3 337.7,377.0 340.4,379.3 343.1,379.0" fill="none" stroke-width="1.1"/>
<polygon points="350.4,376.1 369.6,385.6 358.4,396.0" fill="#f6a53c"/><polyline points="358.4,396.0 356.4,394.4 356.4,391.0 354.4,389.4 354.4,386.1 352.4,384.5 352.4,381.1 350.4,379.5 350.4,376.1" fill="none" stroke-width="1.1"/>
<polygon points="375.5,384.5 367.4,397.0 360.6,384.6" fill="#f6a53c"/><polyline points="360.6,384.6 363.0,383.4 366.6,384.6 369.0,383.4 372.6,384.5 374.9,383.4" fill="none" stroke-width="1.1"/>
<polygon points="385.0,390.8 375.6,403.4 369.2,390.8" fill="#f6a53c"/><polyline points="369.2,390.8 371.3,389.6 374.5,390.8 376.5,389.6 379.7,390.8 381.8,389.6 385.0,390.8" fill="none" stroke-width="1.1"/>
<polygon points="375.5,390.8 395.7,397.8 386.8,408.9" fill="#a8abb3"/><polyline points="386.8,408.9 384.6,407.7 384.0,404.4 381.8,403.1 381.2,399.9 379.0,398.6 378.4,395.3 376.1,394.1 375.5,390.8" fill="none" stroke-width="1.1"/>
<polygon points="330.5,401.3 344.4,407.3 333.3,416.2" fill="#a8abb3"/><polyline points="333.3,416.2 331.7,414.0 332.2,410.2 330.6,408.1 331.0,404.3 329.5,402.1" fill="none" stroke-width="1.1"/>
<polygon points="353.5,401.3 360.6,416.0 346.5,416.0" fill="#f6a53c"/><polyline points="346.5,416.0 346.3,413.5 348.8,411.1 348.7,408.6 351.2,406.2 351.1,403.7 353.5,401.3" fill="none" stroke-width="1.1"/>
<polygon points="375.5,407.6 383.7,423.9 369.5,424.8" fill="#3b93d6"/><polyline points="369.5,424.8 369.1,422.4 371.2,419.9 370.8,417.5 373.0,414.9 372.5,412.6 374.7,410.0 374.2,407.6" fill="none" stroke-width="1.1"/>
<polygon points="380.8,382.4 370.1,365.4 383.9,362.5" fill="#3b93d6"/><polyline points="383.9,362.5 384.8,365.1 383.0,368.2 383.9,370.8 382.1,373.9 383.0,376.5 381.2,379.6 382.1,382.2" fill="none" stroke-width="1.1"/>
<polygon points="405.9,367.7 389.1,376.3 387.9,362.1" fill="#a8abb3"/><polyline points="387.9,362.1 390.4,361.7 393.1,363.7 395.6,363.2 398.2,365.3 400.7,364.8 403.4,366.9 405.8,366.4" fill="none" stroke-width="1.1"/>
<polygon points="424.8,407.6 415.7,392.1 429.7,390.3" fill="#3b93d6"/><polyline points="429.7,390.3 430.2,393.0 428.1,396.1 428.6,398.8 426.5,401.8 426.9,404.5 424.8,407.6" fill="none" stroke-width="1.1"/>
<polygon points="431.1,407.6 444.5,407.0 438.7,418.6" fill="#f6a53c"/><polyline points="438.7,418.6 436.6,417.6 435.6,414.2 433.6,413.1 432.6,409.8 430.5,408.7" fill="none" stroke-width="1.1"/>
<polygon points="447.9,428.5 437.8,415.3 451.7,412.4" fill="#f6a53c"/><polyline points="451.7,412.4 452.3,414.8 450.4,417.8 451.0,420.2 449.1,423.1 449.8,425.6 447.9,428.5" fill="none" stroke-width="1.1"/>
<polygon points="423.8,434.8 418.9,420.1 432.9,422.3" fill="#a8abb3"/><polyline points="432.9,422.3 432.3,425.0 429.2,427.3 428.7,430.0 425.6,432.3 425.0,435.0" fill="none" stroke-width="1.1"/>
<line x1="461.5" y1="348.9" x2="475.1" y2="347.8" stroke="#c7ad86" stroke-width="1.2" stroke-opacity="0.9"/><polygon points="461.5,348.9 442.8,356.4 442.5,342.2" fill="#f6a53c"/><polyline points="442.5,342.2 445.2,341.9 447.9,344.1 450.6,343.8 453.3,346.0 456.0,345.7 458.8,347.9 461.5,347.6" fill="none" stroke-width="1.1"/>
<polygon points="422.7,346.8 436.6,352.8 425.6,361.7" fill="#a8abb3"/><polyline points="425.6,361.7 424.0,359.5 424.4,355.7 422.8,353.5 423.3,349.8 421.7,347.6" fill="none" stroke-width="1.1"/>
<polygon points="426.9,361.4 435.9,370.5 422.1,373.3" fill="#f6a53c"/><line x1="437.7" y1="364.7" x2="418.2" y2="368.6" stroke="#1b1b1b" stroke-width="1.8"/>
<polygon points="474.1,406.5 486.9,418.9 473.8,424.3" fill="#3b93d6"/><polyline points="473.8,424.3 472.7,421.9 473.9,418.4 472.8,415.9 474.0,412.5 472.8,410.0 474.1,406.5" fill="none" stroke-width="1.1"/>
<polygon points="385.0,426.4 393.4,435.6 380.7,438.2" fill="#f6a53c"/><line x1="394.9" y1="429.9" x2="377.1" y2="433.5" stroke="#1b1b1b" stroke-width="1.8"/>
<polygon points="397.6,423.3 404.6,441.1 390.5,441.1" fill="#3b93d6"/><polyline points="390.5,441.1 390.2,438.6 392.5,436.0 392.2,433.5 394.5,430.9 394.2,428.4 396.5,425.8 396.3,423.3" fill="none" stroke-width="1.1"/>
<polygon points="378.7,451.6 389.8,466.6 376.0,470.1" fill="#3b93d6"/><polyline points="376.0,470.1 375.1,467.8 376.8,464.8 375.9,462.5 377.5,459.5 376.7,457.2 378.3,454.2 377.4,451.9" fill="none" stroke-width="1.1"/>
<polygon points="433.2,433.8 446.1,446.9 432.9,452.1" fill="#a8abb3"/><polyline points="432.9,452.1 431.7,450.0 433.0,446.9 431.8,444.7 433.1,441.6 431.9,439.5 433.2,436.4 432.0,434.3" fill="none" stroke-width="1.1"/>
<polygon points="430.1,440.1 434.9,451.1 423.1,450.0" fill="#f6a53c"/><polyline points="423.1,450.0 423.6,447.4 426.6,445.0 427.0,442.4 430.1,440.1" fill="none" stroke-width="1.1"/>
<polygon points="452.1,440.1 458.6,449.5 445.6,449.5" fill="#f6a53c"/><line x1="461.2" y1="444.8" x2="443.0" y2="444.8" stroke="#1b1b1b" stroke-width="1.8"/>
<polygon points="447.9,455.8 450.5,474.3 436.8,470.8" fill="#a8abb3"/><polyline points="436.8,470.8 437.1,468.4 440.0,466.5 440.3,464.1 443.1,462.2 443.5,459.8 446.3,457.9 446.6,455.5" fill="none" stroke-width="1.1"/>
<polygon points="460.5,460.0 470.8,470.5 458.5,474.6" fill="#a8abb3"/><line x1="471.2" y1="463.4" x2="453.9" y2="469.1" stroke="#1b1b1b" stroke-width="1.8"/>
<polygon points="405.9,464.2 415.0,475.6 401.1,477.9" fill="#3b93d6"/><line x1="416.8" y1="468.8" x2="397.2" y2="472.1" stroke="#1b1b1b" stroke-width="1.8"/>
<polygon points="477.2,476.8 489.3,486.4 477.7,492.2" fill="#a8abb3"/><polyline points="477.7,492.2 476.4,489.7 477.5,486.0 476.3,483.5 477.3,479.8 476.1,477.3" fill="none" stroke-width="1.1"/>
<polygon points="439.5,483.0 451.1,495.6 436.3,499.8" fill="#f6a53c"/><polyline points="436.3,499.8 435.6,497.4 437.4,494.2 436.6,491.8 438.4,488.6 437.7,486.2 439.5,483.0" fill="none" stroke-width="1.1"/>
<polygon points="456.3,485.1 467.9,500.0 453.0,503.8" fill="#f6a53c"/><polyline points="453.0,503.8 452.2,501.4 453.9,498.4 453.1,496.1 454.9,493.1 454.1,490.8 455.8,487.8 455.0,485.5" fill="none" stroke-width="1.1"/>
<polygon points="468.8,487.2 480.5,502.1 465.6,505.9" fill="#f6a53c"/><polyline points="465.6,505.9 464.8,503.5 466.5,500.5 465.7,498.2 467.4,495.2 466.6,492.9 468.4,489.9 467.6,487.5" fill="none" stroke-width="1.1"/>
<polygon points="481.4,483.0 492.4,495.8 478.8,499.7" fill="#f6a53c"/><polyline points="478.8,499.7 478.0,497.2 479.7,494.1 478.9,491.7 480.5,488.6 479.7,486.2 481.4,483.0" fill="none" stroke-width="1.1"/>
<polygon points="422.7,495.6 433.7,508.1 420.1,512.1" fill="#a8abb3"/><polyline points="420.1,512.1 419.3,509.7 421.0,506.6 420.2,504.2 421.8,501.1 421.0,498.7 422.7,495.6" fill="none" stroke-width="1.1"/>
<polygon points="414.3,497.7 422.2,509.1 410.6,511.1" fill="#3b93d6"/><polyline points="410.6,511.1 410.1,508.6 412.1,505.7 411.6,503.3 413.6,500.4 413.0,497.9" fill="none" stroke-width="1.1"/>
<polygon points="431.4,451.5 423.3,440.6 437.4,439.4" fill="#f6a53c"/><polyline points="437.4,439.4 437.5,441.7 435.0,444.2 435.1,446.5 432.6,449.1 432.7,451.4" fill="none" stroke-width="1.1"/>
<polygon points="436.6,450.5 434.8,437.6 446.8,442.4" fill="#a8abb3"/><polyline points="446.8,442.4 446.0,444.5 442.7,445.6 441.9,447.7 438.6,448.9 437.8,451.0" fill="none" stroke-width="1.1"/>
<polygon points="453.4,450.5 447.4,439.3 461.5,440.7" fill="#f6a53c"/><polyline points="461.5,440.7 460.7,443.3 457.4,445.6 456.7,448.2 453.4,450.5" fill="none" stroke-width="1.1"/>
<polygon points="447.1,473.5 438.0,456.6 452.0,454.9" fill="#a8abb3"/><polyline points="452.0,454.9 452.6,457.4 450.6,460.2 451.2,462.7 449.2,465.6 449.8,468.1 447.8,470.9 448.4,473.4" fill="none" stroke-width="1.1"/>
<polygon points="439.7,470.4 430.3,458.2 442.9,455.3" fill="#a8abb3"/><polyline points="442.9,455.3 443.6,458.0 441.7,461.3 442.3,464.1 440.4,467.4 441.0,470.1" fill="none" stroke-width="1.1"/>
<polygon points="470.1,473.5 454.3,464.7 464.2,456.4" fill="#a8abb3"/><line x1="457.7" y1="472.9" x2="471.7" y2="461.2" stroke="#1b1b1b" stroke-width="1.8"/>
<polygon points="409.4,477.7 400.8,465.1 413.7,463.1" fill="#3b93d6"/><line x1="399.3" y1="472.3" x2="417.3" y2="469.5" stroke="#1b1b1b" stroke-width="1.8"/>
<polygon points="405.2,490.3 400.9,476.7 413.7,478.8" fill="#a8abb3"/><polyline points="413.7,478.8 413.2,481.3 410.3,483.4 409.8,485.9 406.9,488.0 406.4,490.5" fill="none" stroke-width="1.1"/>
<polygon points="408.3,499.7 408.5,484.9 416.4,487.3" fill="#c9e04a"/><polyline points="416.4,487.3 416.1,490.2 413.2,492.3 412.8,495.2 409.9,497.3 409.5,500.1" fill="none" stroke-width="1.1"/>
<polygon points="443.9,494.5 436.9,483.0 451.0,483.0" fill="#f6a53c"/><polyline points="451.0,483.0 450.9,485.3 448.2,487.6 448.1,489.9 445.4,492.2 445.2,494.5" fill="none" stroke-width="1.1"/>
<polygon points="433.5,510.2 428.5,494.6 442.6,496.6" fill="#f6a53c"/><polyline points="442.6,496.6 442.3,499.0 439.5,501.1 439.3,503.6 436.5,505.7 436.3,508.1 433.5,510.2" fill="none" stroke-width="1.1"/>
<polygon points="463.9,499.7 459.5,484.4 474.5,487.8" fill="#f6a53c"/><polyline points="474.5,487.8 474.0,490.1 470.9,491.8 470.4,494.1 467.4,495.8 466.9,498.1 463.9,499.7" fill="none" stroke-width="1.1"/>
<polygon points="478.5,480.9 485.6,495.6 471.5,495.6" fill="#f6a53c"/><polyline points="471.5,495.6 471.3,493.1 473.8,490.7 473.7,488.2 476.2,485.8 476.1,483.3 478.5,480.9" fill="none" stroke-width="1.1"/>
<polygon points="470.1,517.6 461.0,503.9 475.1,501.9" fill="#f6a53c"/><polyline points="475.1,501.9 475.5,504.3 473.4,507.1 473.9,509.5 471.8,512.3 472.3,514.8 470.1,517.6" fill="none" stroke-width="1.1"/>
<polygon points="477.5,520.7 470.4,502.9 484.6,502.9" fill="#f6a53c"/><polyline points="484.6,502.9 484.9,505.4 482.5,508.0 482.8,510.5 480.5,513.1 480.8,515.6 478.5,518.2 478.8,520.7" fill="none" stroke-width="1.1"/>
<polygon points="453.4,507.1 444.3,498.0 458.2,495.2" fill="#f6a53c"/><line x1="442.6" y1="503.8" x2="462.0" y2="499.9" stroke="#1b1b1b" stroke-width="1.8"/>
<polygon points="491.1,496.6 473.6,496.8 479.2,483.8" fill="#f6a53c"/><polyline points="479.2,483.8 481.7,484.7 483.2,488.1 485.7,489.0 487.1,492.3 489.6,493.3 491.1,496.6" fill="none" stroke-width="1.1"/>
<polygon points="425.1,494.5 433.2,508.7 419.1,509.7" fill="#a8abb3"/><polyline points="419.1,509.7 418.8,507.2 421.1,504.6 420.8,502.2 423.1,499.6 422.8,497.1 425.1,494.5" fill="none" stroke-width="1.1"/>
<polygon points="421.9,527.0 414.8,513.4 429.0,513.4" fill="#a8abb3"/><polyline points="429.0,513.4 428.9,516.1 426.2,518.8 426.1,521.6 423.3,524.3 423.2,527.0" fill="none" stroke-width="1.1"/>
<polygon points="415.6,499.7 421.1,514.9 408.1,514.0" fill="#3b93d6"/><polyline points="408.1,514.0 408.1,511.5 410.6,509.2 410.6,506.8 413.1,504.5 413.1,502.0 415.6,499.7" fill="none" stroke-width="1.1"/>
<polygon points="540.4,519.7 521.0,518.3 526.2,506.4" fill="#a8abb3"/><line x1="528.3" y1="524.3" x2="535.6" y2="507.7" stroke="#1b1b1b" stroke-width="1.8"/>
<polygon points="435.6,539.6 429.1,528.1 442.0,528.1" fill="#f6a53c"/><polyline points="442.0,528.1 442.0,530.4 439.4,532.7 439.5,535.0 436.9,537.3 436.9,539.6" fill="none" stroke-width="1.1"/>
<polygon points="451.3,538.5 443.2,525.4 457.3,524.4" fill="#3b93d6"/><polyline points="457.3,524.4 457.4,527.1 454.9,530.0 455.0,532.8 452.5,535.7 452.6,538.4" fill="none" stroke-width="1.1"/>
<polygon points="435.6,559.5 434.0,538.7 447.6,542.5" fill="#a8abb3"/><polyline points="447.6,542.5 447.4,545.0 444.6,546.8 444.3,549.2 441.6,551.0 441.3,553.5 438.6,555.3 438.3,557.7 435.6,559.5" fill="none" stroke-width="1.1"/>
<polygon points="466.0,561.6 456.8,542.4 470.9,540.9" fill="#f6a53c"/><polyline points="470.9,540.9 471.6,543.4 469.7,546.1 470.3,548.5 468.4,551.3 469.1,553.7 467.2,556.4 467.9,558.9 466.0,561.6" fill="none" stroke-width="1.1"/>
<polygon points="469.1,571.0 463.1,540.4 477.2,540.9" fill="#f6a53c"/><polyline points="477.2,540.9 477.8,543.4 475.9,545.9 476.5,548.5 474.5,550.9 475.1,553.5 473.2,556.0 473.8,558.5 471.8,561.0 472.4,563.5 470.5,566.0 471.1,568.6 469.1,571.0" fill="none" stroke-width="1.1"/>
<polygon points="459.7,557.4 448.3,544.9 460.5,540.5" fill="#f6a53c"/><polyline points="460.5,540.5 461.6,542.9 460.2,546.2 461.3,548.5 460.0,551.8 461.0,554.2 459.7,557.4" fill="none" stroke-width="1.1"/>
<polygon points="419.8,545.9 428.0,566.5 413.8,567.2" fill="#3b93d6"/><polyline points="413.8,567.2 413.3,564.6 415.3,561.9 414.8,559.3 416.8,556.5 416.3,553.9 418.3,551.2 417.8,548.6 419.8,545.9" fill="none" stroke-width="1.1"/>
<polygon points="416.7,546.9 421.5,566.1 409.7,565.5" fill="#3b93d6"/><polyline points="409.7,565.5 409.4,562.7 411.7,560.2 411.4,557.4 413.7,554.9 413.4,552.1 415.7,549.6 415.4,546.8" fill="none" stroke-width="1.1"/>
<polygon points="433.5,586.8 419.7,574.0 432.5,568.0" fill="#f6a53c"/><polyline points="432.5,568.0 433.8,570.2 432.8,573.4 434.1,575.5 433.1,578.7 434.4,580.9 433.3,584.1 434.6,586.2" fill="none" stroke-width="1.1"/>
<line x1="504.7" y1="567.9" x2="513.1" y2="602.5" stroke="#c7ad86" stroke-width="1.2" stroke-opacity="0.9"/><polygon points="504.7,567.9 493.8,555.6 507.3,551.6" fill="#e52b35"/><polyline points="507.3,551.6 508.2,554.0 506.5,557.0 507.3,559.4 505.6,562.5 506.4,564.8 504.7,567.9" fill="none" stroke-width="1.1"/>
<polygon points="605.4,556.4 592.1,572.0 585.1,559.6" fill="#a8abb3"/><polyline points="585.1,559.6 587.4,558.0 590.9,558.7 593.2,557.1 596.7,557.8 598.9,556.2 602.5,556.8 604.7,555.2" fill="none" stroke-width="1.1"/>
<line x1="411.4" y1="609.4" x2="416.7" y2="626.2" stroke="#c7ad86" stroke-width="1.2" stroke-opacity="0.9"/><polygon points="411.4,609.4 403.6,602.5 415.1,599.6" fill="#3b93d6"/><line x1="402.4" y1="607.2" x2="418.4" y2="603.2" stroke="#1b1b1b" stroke-width="1.8"/>
<polygon points="453.4,608.4 446.5,600.7 458.2,599.3" fill="#f6a53c"/><polyline points="458.2,599.3 457.9,602.1 455.0,605.3 454.7,608.2" fill="none" stroke-width="1.1"/>
<line x1="445.0" y1="627.3" x2="451.3" y2="647.2" stroke="#c7ad86" stroke-width="1.2" stroke-opacity="0.9"/><polygon points="445.0,627.3 433.3,611.2 448.3,607.7" fill="#e52b35"/><polyline points="448.3,607.7 449.1,610.2 447.3,613.3 448.1,615.8 446.4,618.9 447.2,621.4 445.5,624.5 446.3,627.0" fill="none" stroke-width="1.1"/>
<polygon points="432.4,616.8 434.7,629.1 422.6,624.6" fill="#f3efc2"/><polyline points="422.6,624.6 423.8,622.2 427.5,620.7 428.7,618.3 432.4,616.8" fill="none" stroke-width="1.1"/>
<polygon points="431.4,647.2 423.2,629.3 437.4,628.5" fill="#f6a53c"/><polyline points="437.4,628.5 437.8,631.1 435.7,633.9 436.1,636.4 433.9,639.2 434.4,641.8 432.2,644.5 432.7,647.1" fill="none" stroke-width="1.1"/>
<polygon points="463.9,608.4 474.0,627.2 460.0,629.4" fill="#3b93d6"/><polyline points="460.0,629.4 459.2,627.0 461.0,624.2 460.2,621.7 461.9,618.9 461.1,616.5 462.9,613.6 462.1,611.2 463.9,608.4" fill="none" stroke-width="1.1"/>
<line x1="432.4" y1="690.1" x2="437.7" y2="710.1" stroke="#c7ad86" stroke-width="1.2" stroke-opacity="0.9"/><polygon points="432.4,690.1 420.4,674.3 434.0,670.3" fill="#3b93d6"/><polyline points="434.0,670.3 435.0,672.8 433.5,676.0 434.5,678.5 433.1,681.7 434.1,684.1 432.6,687.3 433.7,689.8" fill="none" stroke-width="1.1"/>
<line x1="525.7" y1="702.7" x2="539.3" y2="736.3" stroke="#c7ad86" stroke-width="1.2" stroke-opacity="0.9"/><polygon points="525.7,702.7 513.3,685.9 526.8,681.8" fill="#3b93d6"/><polyline points="526.8,681.8 527.9,684.1 526.5,687.0 527.6,689.3 526.3,692.3 527.4,694.5 526.0,697.5 527.1,699.7 525.7,702.7" fill="none" stroke-width="1.1"/>
<line x1="551.9" y1="731.0" x2="546.7" y2="704.8" stroke="#c7ad86" stroke-width="1.2" stroke-opacity="0.9"/><polygon points="551.9,731.0 562.0,748.7 548.1,751.1" fill="#3b93d6"/><polyline points="548.1,751.1 547.3,748.4 549.2,745.3 548.4,742.7 550.3,739.6 549.5,737.0 551.4,733.9 550.6,731.2" fill="none" stroke-width="1.1"/>
<line x1="537.2" y1="761.4" x2="542.5" y2="780.1" stroke="#c7ad86" stroke-width="1.2" stroke-opacity="0.9"/><polygon points="537.2,761.4 526.5,745.8 540.4,742.7" fill="#3b93d6"/><polyline points="540.4,742.7 541.2,745.1 539.5,748.1 540.3,750.5 538.6,753.4 539.4,755.8 537.7,758.8 538.5,761.1" fill="none" stroke-width="1.1"/>
<line x1="412.5" y1="762.5" x2="428.2" y2="748.8" stroke="#c7ad86" stroke-width="1.2" stroke-opacity="0.9"/><polygon points="412.5,762.5 403.2,778.6 394.6,767.3" fill="#f6a53c"/><line x1="411.7" y1="775.6" x2="399.6" y2="759.9" stroke="#1b1b1b" stroke-width="1.8"/>
<polygon points="719.5,184.2 702.9,172.1 713.5,164.6" fill="#a8abb3"/><line x1="706.4" y1="181.5" x2="721.3" y2="171.0" stroke="#1b1b1b" stroke-width="1.8"/>
<line x1="699.9" y1="212.3" x2="714.6" y2="202.6" stroke="#c7ad86" stroke-width="1.2" stroke-opacity="0.9"/><polygon points="699.9,212.3 683.0,226.7 677.7,213.6" fill="#f6a53c"/><line x1="693.8" y1="225.5" x2="686.4" y2="207.1" stroke="#1b1b1b" stroke-width="1.8"/>
<line x1="872.3" y1="255.1" x2="874.7" y2="294.3" stroke="#c7ad86" stroke-width="1.2" stroke-opacity="0.9"/><polygon points="872.3,255.1 864.5,236.3 878.6,235.8" fill="#3b93d6"/><polyline points="878.6,235.8 879.0,238.5 876.8,241.3 877.2,244.0 875.0,246.8 875.4,249.6 873.2,252.4 873.6,255.1" fill="none" stroke-width="1.1"/>
<line x1="734.5" y1="713.5" x2="719.6" y2="688.6" stroke="#c7ad86" stroke-width="1.2" stroke-opacity="0.9"/><polygon points="734.5,713.5 750.9,725.8 739.0,733.5" fill="#e52b35"/><polyline points="739.0,733.5 737.2,731.3 737.7,727.8 736.0,725.6 736.4,722.1 734.7,719.9 735.1,716.3 733.4,714.2" fill="none" stroke-width="1.1"/>
<polygon points="411.1,819.2 424.5,834.1 412.6,839.2" fill="#f6a53c"/><line x1="423.2" y1="824.3" x2="406.5" y2="831.5" stroke="#1b1b1b" stroke-width="1.8"/>
<polygon points="126.0,140.0 153.6,141.3 146.4,158.7" fill="#e52b35"/><polyline points="146.4,158.7 143.8,158.0 142.3,155.0 139.8,154.3 138.2,151.2 135.7,150.6 134.1,147.5 131.6,146.8 130.1,143.7 127.5,143.1 126.0,140.0" fill="none" stroke-width="1.1"/>
<polygon points="147.0,135.0 158.8,158.9 141.2,161.1" fill="#e52b35"/><polyline points="141.2,161.1 140.5,158.6 142.4,155.8 141.7,153.4 143.5,150.6 142.8,148.2 144.7,145.4 144.0,143.0 145.8,140.2 145.1,137.8 147.0,135.0" fill="none" stroke-width="1.1"/>
<polygon points="128.0,151.0 147.3,150.4 140.7,165.6" fill="#f6a53c"/><polyline points="140.7,165.6 138.4,164.7 137.1,161.4 134.7,160.5 133.4,157.2 131.1,156.4 129.8,153.1 127.5,152.2" fill="none" stroke-width="1.1"/>
<polygon points="148.0,130.0 136.7,118.4 155.3,115.6" fill="#5fe33b"/><polyline points="155.3,115.6 155.4,117.8 152.9,120.4 152.9,122.6 150.4,125.2 150.5,127.4 148.0,130.0" fill="none" stroke-width="1.1"/>
<polygon points="160.0,143.0 149.1,131.1 158.9,126.9" fill="#5fe33b"/><polyline points="158.9,126.9 160.3,129.1 159.3,132.3 160.6,134.4 159.6,137.6 161.0,139.8 160.0,143.0" fill="none" stroke-width="1.1"/>
<polygon points="167.0,145.0 173.9,155.5 162.1,156.5" fill="#a8abb3"/><polyline points="162.1,156.5 162.0,153.8 164.6,150.8 164.5,148.0 167.0,145.0" fill="none" stroke-width="1.1"/>
<polygon points="176.0,150.0 166.2,138.7 183.8,137.3" fill="#2e8a4c"/><polyline points="183.8,137.3 183.6,139.7 180.7,142.4 180.4,144.8 177.6,147.5 177.3,149.9" fill="none" stroke-width="1.1"/>
<polygon points="170.0,179.0 155.1,159.2 180.9,156.8" fill="#1b2590"/><polyline points="180.9,156.8 181.0,159.1 178.5,161.7 178.6,164.1 176.1,166.6 176.1,169.0 173.6,171.6 173.7,173.9 171.2,176.5 171.3,178.9" fill="none" stroke-width="1.1"/>
<polygon points="172.0,176.0 163.9,160.4 178.1,159.6" fill="#3b93d6"/><polyline points="178.1,159.6 178.4,162.2 176.0,165.0 176.3,167.7 174.0,170.5 174.3,173.2 172.0,176.0" fill="none" stroke-width="1.1"/>
<polygon points="199.0,127.0 180.3,128.2 185.7,113.8" fill="#2e8a4c"/><polyline points="185.7,113.8 188.1,114.5 189.5,117.6 191.9,118.3 193.3,121.4 195.7,122.0 197.1,125.1 199.5,125.8" fill="none" stroke-width="1.1"/>
<polygon points="259.0,370.0 276.1,363.2 273.9,380.8" fill="#f6a53c"/><polyline points="273.9,380.8 271.6,380.5 269.6,377.7 267.4,377.5 265.4,374.6 263.1,374.4 261.1,371.5 258.8,371.3" fill="none" stroke-width="1.1"/>
<polygon points="278.0,356.0 293.2,370.8 276.8,377.2" fill="#f6a53c"/><polyline points="276.8,377.2 275.7,375.0 277.1,371.9 276.0,369.7 277.4,366.6 276.3,364.4 277.7,361.3 276.6,359.1 278.0,356.0" fill="none" stroke-width="1.1"/>
<polygon points="297.0,353.0 308.2,371.8 291.8,374.2" fill="#a8abb3"/><polyline points="291.8,374.2 291.2,371.8 293.1,368.9 292.5,366.5 294.4,363.6 293.8,361.2 295.7,358.3 295.1,355.8 297.0,353.0" fill="none" stroke-width="1.1"/>
<polygon points="288.0,350.0 301.5,363.2 288.5,368.8" fill="#f6a53c"/><polyline points="288.5,368.8 287.2,366.7 288.4,363.5 287.1,361.3 288.2,358.1 287.0,355.9 288.1,352.7 286.8,350.5" fill="none" stroke-width="1.1"/>
<polygon points="276.0,398.0 269.3,383.5 284.7,384.5" fill="#a8abb3"/><line x1="265.8" y1="390.2" x2="287.2" y2="391.8" stroke="#1b1b1b" stroke-width="1.8"/>
<polygon points="268.0,360.0 278.9,374.3 265.1,377.7" fill="#f6a53c"/><polyline points="265.1,377.7 264.3,375.1 266.1,371.8 265.3,369.2 267.0,365.9 266.3,363.3 268.0,360.0" fill="none" stroke-width="1.1"/>
<polygon points="306.0,362.0 313.6,372.9 304.4,375.1" fill="#3b93d6"/><polyline points="304.4,375.1 303.5,372.8 305.1,369.9 304.1,367.6 305.7,364.6 304.7,362.3" fill="none" stroke-width="1.1"/>
<polygon points="313.0,364.0 319.3,375.6 308.7,376.4" fill="#5fe33b"/><polyline points="308.7,376.4 308.3,374.1 310.4,371.5 310.0,369.1 312.1,366.5 311.7,364.1" fill="none" stroke-width="1.1"/>
<polygon points="333.0,348.0 321.9,363.9 314.1,352.1" fill="#a8abb3"/><line x1="331.0" y1="361.2" x2="320.0" y2="344.8" stroke="#1b1b1b" stroke-width="1.8"/>
<polygon points="349.0,330.0 340.5,360.6 325.5,351.4" fill="#f6a53c"/><polyline points="325.5,351.4 326.3,348.9 329.4,347.8 330.2,345.3 333.3,344.2 334.2,341.8 337.2,340.7 338.1,338.2 341.2,337.1 342.0,334.7 345.1,333.6 345.9,331.1 349.0,330.0" fill="none" stroke-width="1.1"/>
<polygon points="345.0,382.0 307.8,389.3 308.2,372.7" fill="#f6a53c"/><polyline points="308.2,372.7 310.9,372.1 313.5,374.1 316.1,373.4 318.7,375.4 321.4,374.7 324.0,376.7 326.6,376.1 329.2,378.0 331.9,377.4 334.5,379.4 337.2,378.7 339.7,380.7 342.4,380.0 345.0,382.0" fill="none" stroke-width="1.1"/>
<polygon points="352.0,392.0 335.2,392.5 340.8,379.5" fill="#f6a53c"/><polyline points="340.8,379.5 343.2,380.4 344.5,383.7 346.9,384.6 348.3,387.8 350.6,388.7 352.0,392.0" fill="none" stroke-width="1.1"/>
<polygon points="282.0,370.0 300.0,364.1 300.0,375.9" fill="#f6a53c"/><polyline points="300.0,375.9 297.4,376.4 294.9,374.2 292.3,374.7 289.7,372.5 287.1,373.0 284.6,370.8 282.0,371.3" fill="none" stroke-width="1.1"/>
<polygon points="300.0,262.0 312.5,273.2 299.5,278.8" fill="#a8abb3"/><line x1="312.1" y1="265.1" x2="293.9" y2="272.9" stroke="#1b1b1b" stroke-width="1.8"/>
<polygon points="318.0,270.0 318.5,286.8 305.5,281.2" fill="#a8abb3"/><line x1="324.1" y1="280.9" x2="305.9" y2="273.1" stroke="#1b1b1b" stroke-width="1.8"/>
<polygon points="296.0,285.0 309.2,292.2 298.8,299.8" fill="#f6a53c"/><polyline points="298.8,299.8 297.1,297.6 297.7,293.9 296.0,291.7 296.6,288.0 294.9,285.8" fill="none" stroke-width="1.1"/>
<polygon points="322.0,292.0 322.4,308.0 309.6,302.0" fill="#a8abb3"/><line x1="328.0" y1="302.7" x2="310.0" y2="294.3" stroke="#1b1b1b" stroke-width="1.8"/>
<polygon points="336.0,300.0 331.4,316.5 320.6,307.5" fill="#f6a53c"/><polyline points="320.6,307.5 322.1,305.4 325.7,305.0 327.3,302.9 330.9,302.5 332.4,300.4 336.0,300.0" fill="none" stroke-width="1.1"/>
<polygon points="312.0,308.0 326.6,313.4 317.4,322.6" fill="#a8abb3"/><polyline points="317.4,322.6 315.4,320.6 315.2,316.8 313.2,314.8 313.1,310.9 311.1,308.9" fill="none" stroke-width="1.1"/>
<polygon points="345.0,318.0 338.8,333.2 329.2,322.8" fill="#f6a53c"/><polyline points="329.2,322.8 331.0,321.0 334.5,321.2 336.2,319.4 339.7,319.6 341.5,317.8 345.0,318.0" fill="none" stroke-width="1.1"/>
<polygon points="352.0,292.0 349.4,307.6 338.6,300.4" fill="#a8abb3"/><line x1="355.6" y1="303.0" x2="340.4" y2="293.0" stroke="#1b1b1b" stroke-width="1.8"/>
<polygon points="392.0,240.0 404.5,251.2 391.5,256.8" fill="#a8abb3"/><line x1="404.1" y1="243.1" x2="385.9" y2="250.9" stroke="#1b1b1b" stroke-width="1.8"/>
<polygon points="402.0,262.0 400.1,279.5 387.9,272.5" fill="#a8abb3"/><line x1="406.6" y1="273.9" x2="389.4" y2="264.1" stroke="#1b1b1b" stroke-width="1.8"/>
<polygon points="388.0,290.0 401.4,298.4 390.6,305.6" fill="#f6a53c"/><polyline points="390.6,305.6 389.1,303.7 389.7,300.4 388.2,298.5 388.9,295.2 387.4,293.3 388.0,290.0" fill="none" stroke-width="1.1"/>
<polygon points="372.0,318.0 372.5,334.8 359.5,329.2" fill="#f6a53c"/><polyline points="359.5,329.2 360.4,326.8 363.7,325.5 364.6,323.1 367.8,321.7 368.7,319.4 372.0,318.0" fill="none" stroke-width="1.1"/>
<polygon points="300.0,238.0 302.2,253.8 289.8,250.2" fill="#3b93d6"/><polyline points="289.8,250.2 290.2,247.8 293.2,246.1 293.6,243.8 296.6,242.1 297.0,239.7 300.0,238.0" fill="none" stroke-width="1.1"/>
<line x1="590.0" y1="418.0" x2="624.0" y2="446.0" stroke="#c7ad86" stroke-width="1.2" stroke-opacity="0.9"/><polygon points="590.0,418.0 608.8,425.8 599.2,436.2" fill="#a8abb3"/><polyline points="599.2,436.2 597.0,434.5 596.6,431.0 594.4,429.3 593.9,425.8 591.7,424.1 591.3,420.6 589.1,419.0" fill="none" stroke-width="1.1"/>
<line x1="748.0" y1="557.0" x2="757.0" y2="583.0" stroke="#c7ad86" stroke-width="1.2" stroke-opacity="0.9"/><polygon points="748.0,557.0 737.4,540.3 752.6,537.7" fill="#3b93d6"/><polyline points="752.6,537.7 753.2,540.3 751.3,543.2 751.9,545.8 750.0,548.7 750.6,551.3 748.7,554.2 749.3,556.8" fill="none" stroke-width="1.1"/>
<polygon points="358.0,558.0 365.7,576.0 350.3,576.0" fill="#3b93d6"/><polyline points="350.3,576.0 350.1,573.4 352.5,570.9 352.3,568.3 354.7,565.7 354.5,563.1 356.9,560.6 356.7,558.0" fill="none" stroke-width="1.1"/>
<polygon points="327.0,395.0 336.4,408.7 323.6,411.3" fill="#a8abb3"/><polyline points="323.6,411.3 322.9,408.8 324.8,405.8 324.0,403.4 325.9,400.4 325.2,398.0 327.0,395.0" fill="none" stroke-width="1.1"/>
<polygon points="16.0,68.0 21.3,88.0 10.7,88.0" fill="#e52b35"/><polyline points="10.7,88.0 10.1,85.1 12.2,82.3 11.7,79.4 13.7,76.6 13.2,73.7 15.2,70.9 14.7,68.0" fill="none" stroke-width="1.1"/>
<line x1="71.7" y1="59.5" x2="87.5" y2="57.6" stroke="#c7ad86" stroke-width="1.2" stroke-opacity="0.9"/><polygon points="71.7,59.5 53.3,69.0 51.7,53.8" fill="#f6a53c"/><polyline points="51.7,53.8 54.5,53.3 57.4,55.4 60.2,54.9 63.1,57.0 65.9,56.6 68.8,58.7 71.6,58.2" fill="none" stroke-width="1.1"/>
<polygon points="62.0,72.0 62.9,90.0 47.1,82.0" fill="#3b93d6"/><polyline points="47.1,82.0 48.4,79.8 52.1,78.7 53.4,76.4 57.0,75.3 58.4,73.1 62.0,72.0" fill="none" stroke-width="1.1"/>
<polygon points="60.0,70.0 56.1,86.3 47.9,81.7" fill="#1b2590"/><polyline points="47.9,81.7 48.8,79.1 51.9,77.8 52.8,75.2 56.0,73.9 56.9,71.3 60.0,70.0" fill="none" stroke-width="1.1"/>
</g>
<text x="631" y="426" font-family="Liberation Sans" font-size="14" font-weight="bold" fill="#fff" stroke="#444" stroke-width="2.5" paint-order="stroke" stroke-linejoin="round" text-anchor="start">A-2:máy bay</text>
<text x="877" y="474" font-family="Liberation Sans" font-size="14" font-weight="bold" fill="#111" stroke="#111" stroke-width="0.7" paint-order="stroke" stroke-linejoin="round" text-anchor="start">CSP</text>
<text x="643" y="677" font-family="Liberation Sans" font-size="14" font-weight="bold" fill="#111" stroke="#111" stroke-width="0.7" paint-order="stroke" stroke-linejoin="round" text-anchor="start">ESP</text>
<text x="359" y="492" font-family="Liberation Sans" font-size="13" font-weight="bold" fill="#fff" stroke="#444" stroke-width="2.5" paint-order="stroke" stroke-linejoin="round" text-anchor="start">A-1:BF</text>
<text x="346" y="418" font-family="Liberation Sans" font-size="12" font-weight="bold" fill="#111" stroke="#111" stroke-width="0.6" paint-order="stroke" stroke-linejoin="round" text-anchor="start">ESP SP</text>
<rect x="484" y="424" width="72" height="16" fill="#fff" opacity="0.6" rx="2"/>
<text x="487" y="436" font-family="Liberation Sans" font-size="12" fill="#111">HAI NAM 39</text>
<rect x="465.5" y="403.5" width="26" height="26" fill="none" stroke="#d63a3a" stroke-width="1.1" opacity="0.85"/>
<ellipse cx="474" cy="127" rx="5" ry="3.5" fill="#fff" opacity="0.9"/>
<g transform="translate(324.6,333.5) rotate(45)"><rect x="-5" y="-5" width="10" height="10" fill="#f7c0cf" stroke="#f49ab4" stroke-width="1"/><rect x="-1.5" y="-1.5" width="3" height="3" fill="#e2607e"/></g>
<g transform="translate(131,118) rotate(45)"><rect x="-3.5" y="-3.5" width="7" height="7" fill="#f5adc4" stroke="#ec8cab" stroke-width="1"/></g>
<g transform="translate(141,131) rotate(45)"><rect x="-3.5" y="-3.5" width="7" height="7" fill="#f5adc4" stroke="#ec8cab" stroke-width="1"/></g>
<g transform="translate(176,133) rotate(45)"><rect x="-3.5" y="-3.5" width="7" height="7" fill="#f5adc4" stroke="#ec8cab" stroke-width="1"/></g>
<g transform="translate(146,161) rotate(45)"><rect x="-3.5" y="-3.5" width="7" height="7" fill="#f5adc4" stroke="#ec8cab" stroke-width="1"/></g>
<g transform="translate(62,68) rotate(45)"><rect x="-3.5" y="-3.5" width="7" height="7" fill="#f5adc4" stroke="#ec8cab" stroke-width="1"/></g>
<polygon points="16,69 11.5,87 16,87" fill="#1a1a1a"/>
<rect x="419" y="165" width="177" height="32" rx="4" fill="#f1d24e" fill-opacity="0.78" stroke="#f6eeb0" stroke-width="1.5"/>
<text x="430" y="185" font-family="Liberation Sans" font-size="15.4" fill="#7d7d62">15°21'32N 109°06'50E</text>
<circle cx="485" cy="200" r="2.5" fill="#f5c800"/><circle cx="507" cy="205" r="3" fill="#f5c800"/>
<rect x="378" y="816" width="226" height="27" fill="#e8f6fa" fill-opacity="0.45"/>
<text x="387" y="836" font-family="Liberation Sans" font-size="15.5" fill="#3d5960">15° 14′ 25″ N 108° 47′ 01″ E</text>
<text x="70.0" y="851" font-family="Liberation Sans" font-size="12" fill="#111" text-anchor="middle" stroke="#e6f6f8" stroke-opacity="0.8" stroke-width="2" paint-order="stroke">108° 42′ 01″ E</text>
<text x="175.7" y="851" font-family="Liberation Sans" font-size="12" fill="#111" text-anchor="middle" stroke="#e6f6f8" stroke-opacity="0.8" stroke-width="2" paint-order="stroke">108° 48′ 01″ E</text>
<text x="281.3" y="851" font-family="Liberation Sans" font-size="12" fill="#111" text-anchor="middle" stroke="#e6f6f8" stroke-opacity="0.8" stroke-width="2" paint-order="stroke">108° 54′ 01″ E</text>
<text x="387.0" y="851" font-family="Liberation Sans" font-size="12" fill="#111" text-anchor="middle" stroke="#e6f6f8" stroke-opacity="0.8" stroke-width="2" paint-order="stroke">109° 00′ 00″ E</text>
<text x="492.7" y="851" font-family="Liberation Sans" font-size="12" fill="#111" text-anchor="middle" stroke="#e6f6f8" stroke-opacity="0.8" stroke-width="2" paint-order="stroke">109° 06′ 01″ E</text>
<text x="598.4" y="851" font-family="Liberation Sans" font-size="12" fill="#111" text-anchor="middle" stroke="#e6f6f8" stroke-opacity="0.8" stroke-width="2" paint-order="stroke">109° 12′ 01″ E</text>
<text x="704.0" y="851" font-family="Liberation Sans" font-size="12" fill="#111" text-anchor="middle" stroke="#e6f6f8" stroke-opacity="0.8" stroke-width="2" paint-order="stroke">109° 18′ 01″ E</text>
<text x="809.7" y="851" font-family="Liberation Sans" font-size="12" fill="#111" text-anchor="middle" stroke="#e6f6f8" stroke-opacity="0.8" stroke-width="2" paint-order="stroke">109° 24′ 00″ E</text>
<text x="915.4" y="851" font-family="Liberation Sans" font-size="12" fill="#111" text-anchor="middle" stroke="#e6f6f8" stroke-opacity="0.8" stroke-width="2" paint-order="stroke">109° 30′ 00″ E</text>
<text x="1021.0" y="851" font-family="Liberation Sans" font-size="12" fill="#111" text-anchor="middle" stroke="#e6f6f8" stroke-opacity="0.8" stroke-width="2" paint-order="stroke">109° 36′ 01″ E</text>
<text x="1126.7" y="851" font-family="Liberation Sans" font-size="12" fill="#111" text-anchor="middle" stroke="#e6f6f8" stroke-opacity="0.8" stroke-width="2" paint-order="stroke">109° 42′ 00″ E</text>
<text x="1232.4" y="851" font-family="Liberation Sans" font-size="12" fill="#111" text-anchor="middle" stroke="#e6f6f8" stroke-opacity="0.8" stroke-width="2" paint-order="stroke">109° 48′ 00″ E</text>
<text x="1338.0" y="851" font-family="Liberation Sans" font-size="12" fill="#111" text-anchor="middle" stroke="#e6f6f8" stroke-opacity="0.8" stroke-width="2" paint-order="stroke">109° 54′ 00″ E</text>
<text x="1443.7" y="851" font-family="Liberation Sans" font-size="12" fill="#111" text-anchor="middle" stroke="#e6f6f8" stroke-opacity="0.8" stroke-width="2" paint-order="stroke">110° 00′ 00″ E</text>
<text x="1549.4" y="851" font-family="Liberation Sans" font-size="12" fill="#111" text-anchor="middle" stroke="#e6f6f8" stroke-opacity="0.8" stroke-width="2" paint-order="stroke">110° 06′ 00″ E</text>
<rect x="-2" y="823" width="90" height="19" rx="2" fill="#7aa9b5" fill-opacity="0.55" stroke="#dfeef2" stroke-opacity="0.7"/>
<text x="23" y="837" font-family="Liberation Sans" font-size="12" fill="#e8f4f6">10 km</text>
<rect x="0" y="855.5" width="1608" height="3.5" fill="#1b2a47"/>
<rect x="0" y="853.5" width="1608" height="2" fill="#e6f3f6" opacity="0.6"/>
<rect x="-4" y="65" width="12" height="42" rx="3" fill="#5b7db2" fill-opacity="0.85"/>
<rect x="0" y="74" width="3" height="2" fill="#fff"/><rect x="0" y="98" width="3" height="2" fill="#fff"/>
</svg>
<div id="hdr">
  <svg style="position:absolute;left:0;top:0" width="180" height="53" viewBox="0 0 180 53">
    <path d="M9,13 C15,9 21,10 24,15 L32,31 L43,14 C45,11 48,10 51,11 L35,36 C32,40 27,40 25,36 L17,20 C15,16 12,14 9,13 Z" fill="#fff"/><path d="M38,15 C41,12 45,11 48,11.5 L46,13 C43,13 40,14 38,15 Z" fill="#243577" opacity="0.6"/>
    <text x="47" y="36" font-family="Liberation Sans" font-weight="bold" font-size="29" fill="#fff" stroke="#fff" stroke-width="1" letter-spacing="-1.0">ishipel</text>
  </svg>
  <div class="nav act" style="left:180px;width:114px;padding-left:7px;letter-spacing:-0.8px">QUẢN LÝ TÀU</div>
  <div class="nav" style="left:301px">Hiển thị</div><div class="chev" style="left:366px"></div>
  <div class="nav" style="left:396px">Giám sát</div><div class="chev" style="left:468px"></div>
  <div class="nav" style="left:498px">Lịch sử</div><div class="chev" style="left:557px"></div>
  <div class="nav" style="left:587px;letter-spacing:-0.6px">CSDL</div><div class="chev" style="left:634px"></div>
  <div class="nav" style="left:663px">Công cụ</div><div class="chev" style="left:730px"></div>
  <svg style="position:absolute;left:768px;top:16px" width="22" height="22" viewBox="0 0 22 22"><circle cx="9" cy="9" r="6.5" fill="none" stroke="#fff" stroke-width="2"/><line x1="13.8" y1="13.8" x2="19" y2="19" stroke="#fff" stroke-width="2.2" stroke-linecap="round"/></svg>
</div>

<div id="panel">
  <div id="ph">
    <svg style="position:absolute;left:27px;top:18px" width="36" height="26" viewBox="0 0 36 26"><rect x="0.5" y="0.5" width="35" height="25" rx="3" fill="#e31b23" stroke="#b5141a"/><polygon points="18,5 20.1,11.2 26.6,11.2 21.3,15.1 23.3,21.3 18,17.4 12.7,21.3 14.7,15.1 9.4,11.2 15.9,11.2" fill="#ffde00"/></svg>
    <div style="position:absolute;left:68px;top:23px;color:#fff;font-weight:bold;font-size:15px;line-height:18px">HAI NAM 39</div>
  </div>
  <div class="row" style="top:69px">MMSI: <b>574002900</b></div>
  <div class="row" style="top:96px">Callsign/IMO:<b>XVAO9/9276755</b></div>
  <div class="row" style="top:124px">National: <b>Viet Nam</b></div>
  <div class="row" style="top:151px">Type of ship:<b>Cargo</b></div>
  <div class="row" style="top:179px">Dimension:<b>171x27 m</b></div>
  <div class="row" style="top:217px">Status:<b>Under way using engine</b></div>
  <div class="row" style="top:245px">Draught:<b>5 m</b></div>
  <div class="row c2" style="top:245px">E.T.A:<b>13:00 09/11/2025</b></div>
  <div class="row" style="top:272px">Destination:<b>SONDUONG</b></div>
  <div class="row" style="top:311px">S.O.G:<b>9.4 knots</b></div>
  <div class="row c2" style="top:311px">C.O.G:<b>336°</b></div>
  <div class="row" style="top:338px">Heading:<b>340°</b></div>
  <div class="row c2" style="top:338px">R.O.T:<b>Not turning</b></div>
  <div class="row" style="top:366px">Position: <b>15°09'02N / 109°05'33E</b></div>
  <div class="row" style="top:393px">Time of position: <b>14:26:05 08/11/2025 (0 secs ago)</b></div>
  <div class="row" style="top:421px">Class:<b>A</b></div>
  <div class="row c2" style="top:421px"><b>Station: QNG</b></div>
  <div class="btn" style="left:5px;top:458px;width:48px">1H</div>
  <div class="btn" style="left:53px;top:458px;width:48px">3H</div>
  <div class="btn" style="left:101px;top:458px;width:49px">6H</div>
  <div class="btn" style="left:150px;top:458px;width:56px">12H</div>
  <div class="btn" style="left:206px;top:458px;width:57px">24H</div>
  <div class="btn" style="left:263px;top:458px;width:42px">...</div>
  <div class="btn" style="left:305px;top:458px;width:57px;border-right:none">ETA</div>
  <div class="btn" style="left:362px;top:458px;width:51px;background:#e9505c;border:none;border-radius:0 3px 3px 0">
    <svg style="position:absolute;left:20px;top:12px" width="12" height="14" viewBox="0 0 12 14"><rect x="0" y="1.5" width="12" height="2" fill="#fff"/><rect x="4" y="0" width="4" height="2" fill="#fff"/><path d="M1.2,4.5 H10.8 L10,14 H2 Z" fill="#fff"/></svg>
  </div>
  <div class="btn" style="left:5px;top:496px;width:87px;border-radius:0 0 0 3px">THEO DÕI</div>
  <div class="btn" style="left:92px;top:496px;width:89px">THỜI TIẾT</div>
  <div class="btn" style="left:181px;top:496px;width:71px;border-right:none;border-radius:0 0 3px 0">THOÁT</div>
</div>

</body></html>
